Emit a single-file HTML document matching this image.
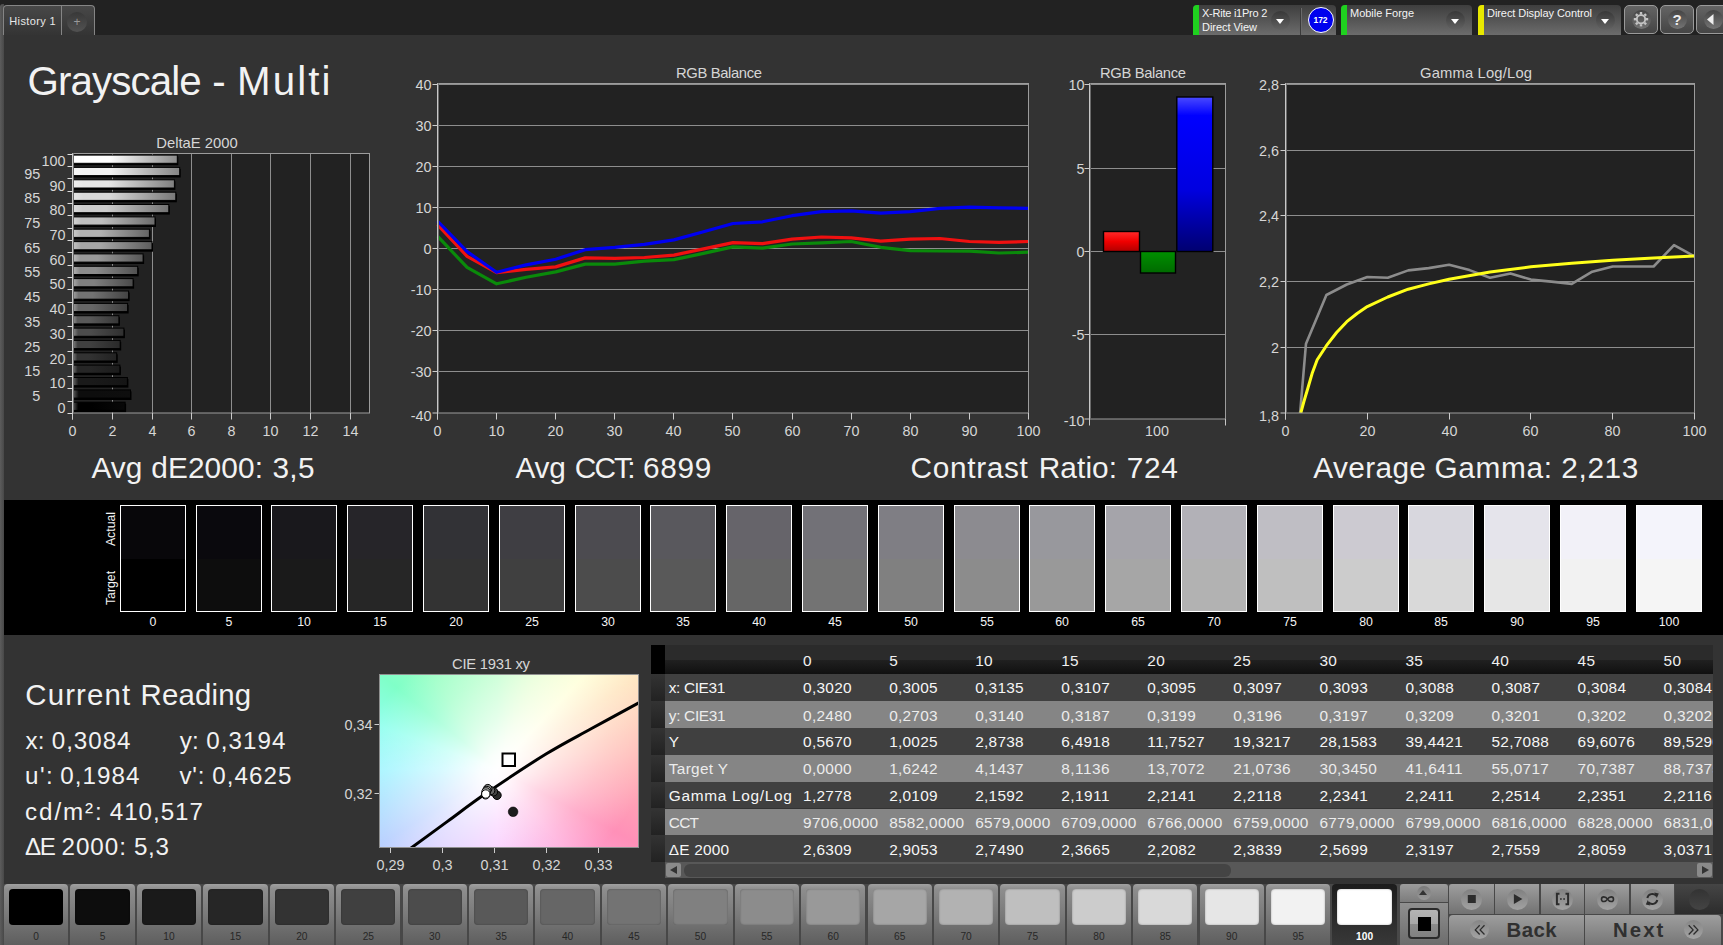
<!DOCTYPE html>
<html lang="en"><head><meta charset="utf-8"><title>Grayscale - Multi</title>
<style>
html,body{margin:0;padding:0;}
body{width:1723px;height:945px;overflow:hidden;background:#333;font-family:"Liberation Sans",sans-serif;position:relative;}
.t{position:absolute;white-space:pre;}
.a{position:absolute;}
.w{position:absolute;top:0;}
svg{position:absolute;left:0;top:0;overflow:visible;}
svg text{font-family:"Liberation Sans",sans-serif;}
.dd{position:absolute;top:5px;height:30px;border-radius:4px 4px 0 0;background:linear-gradient(#3e3e3e,#555 50%,#6c6c6c);overflow:hidden;}
.dd i{position:absolute;left:0;top:0;bottom:0;width:6px;}
.circ{position:absolute;width:19px;height:19px;border-radius:50%;background:linear-gradient(#383838,#626262);}
.tb{position:absolute;top:5px;height:27px;border:1px solid #9a9a9a;border-radius:5px;background:linear-gradient(#646464,#454545);box-sizing:content-box;}
.tb i{position:absolute;left:6.5px;top:4px;width:19px;height:19px;border-radius:50%;background:linear-gradient(#444,#747474);}
</style></head><body>
<div class="a" id="topbar" style="left:0;top:0;width:1723px;height:35px;background:#222;"></div>
<div class="a" id="leftstrip" style="left:0;top:4px;width:3.5px;height:941px;background:linear-gradient(90deg,#5c5c5c,#484848);border-radius:3px 0 0 0;"></div>
<div class="a" style="left:3px;top:5.3px;width:92px;height:29.7px;border-radius:4px 4px 0 0;background:linear-gradient(#484848,#343434);border:1px solid #858585;border-bottom:none;box-sizing:border-box;"></div>
<div class="a" style="left:61px;top:6px;width:1px;height:29px;background:#858585;"></div>
<div class="a" style="left:67px;top:12px;width:20px;height:20px;border-radius:50%;background:linear-gradient(#383838,#525252);"></div>
<span class="t" style="left:9.30px;top:15.69px;font-size:11.00px;line-height:11.00px;color:#e8e8e8;letter-spacing:0.356px;">History 1</span>
<span class="t" style="left:73.50px;top:16.14px;font-size:12.00px;line-height:12.00px;color:#9a9a9a;">+</span>
<div class="dd" style="left:1193px;width:143px;"><i style="background:#1fd11f"></i></div>
<div class="circ" style="left:1270.5px;top:10.5px;"></div>
<div class="a" style="left:1275.5px;top:19px;width:0;height:0;border-left:4.5px solid transparent;border-right:4.5px solid transparent;border-top:5px solid #fff;"></div>
<div class="dd" style="left:1341px;width:131px;"><i style="background:#1fd11f"></i></div>
<div class="circ" style="left:1445.5px;top:10.5px;"></div>
<div class="a" style="left:1450.5px;top:19px;width:0;height:0;border-left:4.5px solid transparent;border-right:4.5px solid transparent;border-top:5px solid #fff;"></div>
<div class="dd" style="left:1478px;width:143px;"><i style="background:#e8e800"></i></div>
<div class="circ" style="left:1595.5px;top:10.5px;"></div>
<div class="a" style="left:1600.5px;top:19px;width:0;height:0;border-left:4.5px solid transparent;border-right:4.5px solid transparent;border-top:5px solid #fff;"></div>
<div class="a" style="left:1300px;top:8px;width:1px;height:27px;background:#3a3a3a;"></div>
<div class="a" style="left:1301px;top:8px;width:1px;height:27px;background:#6a6a6a;"></div>
<span class="t" style="left:1202.00px;top:8.09px;font-size:11.00px;line-height:11.00px;color:#f4f4f4;letter-spacing:-0.248px;">X-Rite i1Pro 2</span>
<span class="t" style="left:1202.00px;top:22.09px;font-size:11.00px;line-height:11.00px;color:#f4f4f4;letter-spacing:-0.039px;">Direct View</span>
<span class="t" style="left:1350.00px;top:8.09px;font-size:11.00px;line-height:11.00px;color:#f4f4f4;letter-spacing:-0.016px;">Mobile Forge</span>
<span class="t" style="left:1487.00px;top:8.09px;font-size:11.00px;line-height:11.00px;color:#f4f4f4;letter-spacing:-0.062px;">Direct Display Control</span>
<div class="a" style="left:1307.5px;top:7px;width:24px;height:24px;border-radius:50%;background:#0000ee;border:1px solid #fff;"></div>
<span class="t" style="left:1313.41px;top:15.80px;font-size:8.50px;line-height:8.50px;color:#fff;font-weight:bold;">172</span>
<div class="tb" style="left:1624px;width:32px;"><i></i></div>
<div class="tb" style="left:1660px;width:32px;"><i></i></div>
<div class="tb" style="left:1696px;width:32px;"><i></i></div>
<svg width="1723" height="40"><g transform="translate(1641,19.2)" fill="none" stroke="#c4c4c4"><circle r="4.2" stroke-width="1.9"/><line x1="0" y1="-5" x2="0" y2="-7.2" stroke-width="2.4" transform="rotate(0)"/><line x1="0" y1="-5" x2="0" y2="-7.2" stroke-width="2.4" transform="rotate(45)"/><line x1="0" y1="-5" x2="0" y2="-7.2" stroke-width="2.4" transform="rotate(90)"/><line x1="0" y1="-5" x2="0" y2="-7.2" stroke-width="2.4" transform="rotate(135)"/><line x1="0" y1="-5" x2="0" y2="-7.2" stroke-width="2.4" transform="rotate(180)"/><line x1="0" y1="-5" x2="0" y2="-7.2" stroke-width="2.4" transform="rotate(225)"/><line x1="0" y1="-5" x2="0" y2="-7.2" stroke-width="2.4" transform="rotate(270)"/><line x1="0" y1="-5" x2="0" y2="-7.2" stroke-width="2.4" transform="rotate(315)"/></g><path d="M1713.5 14 L1713.5 25 L1707 19.5 Z" fill="#eee"/></svg>
<span class="t" style="left:1672.42px;top:11.80px;font-size:15.00px;line-height:15.00px;color:#eee;font-weight:bold;">?</span>
<span class="t" style="left:27.49px;top:62.19px;font-size:40.30px;line-height:40.30px;color:#f2f2f2;"><span class="w" style="left:0.00px;letter-spacing:-0.888px;">Grayscale</span> <span class="w" style="left:184.70px;letter-spacing:0.000px;">-</span> <span class="w" style="left:209.60px;letter-spacing:2.086px;">Multi</span></span>
<span class="t" style="left:91.61px;top:453.37px;font-size:29.80px;line-height:29.80px;color:#f2f2f2;"><span class="w" style="left:0.00px;letter-spacing:-0.109px;">Avg</span> <span class="w" style="left:59.60px;letter-spacing:0.123px;">dE2000:</span> <span class="w" style="left:180.80px;letter-spacing:0.354px;">3,5</span></span>
<span class="t" style="left:515.41px;top:453.37px;font-size:29.80px;line-height:29.80px;color:#f2f2f2;"><span class="w" style="left:0.00px;letter-spacing:-0.175px;">Avg</span> <span class="w" style="left:59.30px;letter-spacing:-1.833px;">CCT:</span> <span class="w" style="left:127.50px;letter-spacing:0.673px;">6899</span></span>
<span class="t" style="left:910.61px;top:453.37px;font-size:29.80px;line-height:29.80px;color:#f2f2f2;"><span class="w" style="left:0.00px;letter-spacing:0.645px;">Contrast</span> <span class="w" style="left:128.10px;letter-spacing:0.107px;">Ratio:</span> <span class="w" style="left:216.20px;letter-spacing:0.622px;">724</span></span>
<span class="t" style="left:1313.31px;top:453.37px;font-size:29.80px;line-height:29.80px;color:#f2f2f2;"><span class="w" style="left:0.00px;letter-spacing:0.361px;">Average</span> <span class="w" style="left:121.20px;letter-spacing:0.655px;">Gamma:</span> <span class="w" style="left:248.00px;letter-spacing:0.623px;">2,213</span></span>
<svg width="1723" height="945" viewBox="0 0 1723 945">
<defs>
<linearGradient id="b0" gradientUnits="userSpaceOnUse" x1="73" x2="125.1" y1="0" y2="0"><stop offset="0" stop-color="rgb(84,84,84)"/><stop offset="0.10" stop-color="rgb(0,0,0)"/><stop offset="0.35" stop-color="rgb(0,0,0)"/><stop offset="1" stop-color="rgb(8,8,8)"/></linearGradient>
<linearGradient id="b1" gradientUnits="userSpaceOnUse" x1="73" x2="130.5" y1="0" y2="0"><stop offset="0" stop-color="rgb(92,92,92)"/><stop offset="0.10" stop-color="rgb(13,13,13)"/><stop offset="0.35" stop-color="rgb(13,13,13)"/><stop offset="1" stop-color="rgb(14,14,14)"/></linearGradient>
<linearGradient id="b2" gradientUnits="userSpaceOnUse" x1="73" x2="127.4" y1="0" y2="0"><stop offset="0" stop-color="rgb(101,101,101)"/><stop offset="0.10" stop-color="rgb(26,26,26)"/><stop offset="0.35" stop-color="rgb(26,26,26)"/><stop offset="1" stop-color="rgb(21,21,21)"/></linearGradient>
<linearGradient id="b3" gradientUnits="userSpaceOnUse" x1="73" x2="119.9" y1="0" y2="0"><stop offset="0" stop-color="rgb(109,109,109)"/><stop offset="0.10" stop-color="rgb(38,38,38)"/><stop offset="0.35" stop-color="rgb(38,38,38)"/><stop offset="1" stop-color="rgb(27,27,27)"/></linearGradient>
<linearGradient id="b4" gradientUnits="userSpaceOnUse" x1="73" x2="116.7" y1="0" y2="0"><stop offset="0" stop-color="rgb(118,118,118)"/><stop offset="0.10" stop-color="rgb(51,51,51)"/><stop offset="0.35" stop-color="rgb(51,51,51)"/><stop offset="1" stop-color="rgb(34,34,34)"/></linearGradient>
<linearGradient id="b5" gradientUnits="userSpaceOnUse" x1="73" x2="120.2" y1="0" y2="0"><stop offset="0" stop-color="rgb(127,127,127)"/><stop offset="0.10" stop-color="rgb(64,64,64)"/><stop offset="0.35" stop-color="rgb(64,64,64)"/><stop offset="1" stop-color="rgb(41,41,41)"/></linearGradient>
<linearGradient id="b6" gradientUnits="userSpaceOnUse" x1="73" x2="123.9" y1="0" y2="0"><stop offset="0" stop-color="rgb(135,135,135)"/><stop offset="0.10" stop-color="rgb(76,76,76)"/><stop offset="0.35" stop-color="rgb(76,76,76)"/><stop offset="1" stop-color="rgb(47,47,47)"/></linearGradient>
<linearGradient id="b7" gradientUnits="userSpaceOnUse" x1="73" x2="118.9" y1="0" y2="0"><stop offset="0" stop-color="rgb(143,143,143)"/><stop offset="0.10" stop-color="rgb(89,89,89)"/><stop offset="0.35" stop-color="rgb(89,89,89)"/><stop offset="1" stop-color="rgb(54,54,54)"/></linearGradient>
<linearGradient id="b8" gradientUnits="userSpaceOnUse" x1="73" x2="127.6" y1="0" y2="0"><stop offset="0" stop-color="rgb(152,152,152)"/><stop offset="0.10" stop-color="rgb(102,102,102)"/><stop offset="0.35" stop-color="rgb(102,102,102)"/><stop offset="1" stop-color="rgb(61,61,61)"/></linearGradient>
<linearGradient id="b9" gradientUnits="userSpaceOnUse" x1="73" x2="128.6" y1="0" y2="0"><stop offset="0" stop-color="rgb(161,161,161)"/><stop offset="0.10" stop-color="rgb(115,115,115)"/><stop offset="0.35" stop-color="rgb(115,115,115)"/><stop offset="1" stop-color="rgb(67,67,67)"/></linearGradient>
<linearGradient id="b10" gradientUnits="userSpaceOnUse" x1="73" x2="133.1" y1="0" y2="0"><stop offset="0" stop-color="rgb(169,169,169)"/><stop offset="0.10" stop-color="rgb(128,128,128)"/><stop offset="0.35" stop-color="rgb(128,128,128)"/><stop offset="1" stop-color="rgb(74,74,74)"/></linearGradient>
<linearGradient id="b11" gradientUnits="userSpaceOnUse" x1="73" x2="137.7" y1="0" y2="0"><stop offset="0" stop-color="rgb(177,177,177)"/><stop offset="0.10" stop-color="rgb(140,140,140)"/><stop offset="0.35" stop-color="rgb(140,140,140)"/><stop offset="1" stop-color="rgb(80,80,80)"/></linearGradient>
<linearGradient id="b12" gradientUnits="userSpaceOnUse" x1="73" x2="143.1" y1="0" y2="0"><stop offset="0" stop-color="rgb(186,186,186)"/><stop offset="0.10" stop-color="rgb(153,153,153)"/><stop offset="0.35" stop-color="rgb(153,153,153)"/><stop offset="1" stop-color="rgb(87,87,87)"/></linearGradient>
<linearGradient id="b13" gradientUnits="userSpaceOnUse" x1="73" x2="152.0" y1="0" y2="0"><stop offset="0" stop-color="rgb(195,195,195)"/><stop offset="0.10" stop-color="rgb(166,166,166)"/><stop offset="0.35" stop-color="rgb(166,166,166)"/><stop offset="1" stop-color="rgb(94,94,94)"/></linearGradient>
<linearGradient id="b14" gradientUnits="userSpaceOnUse" x1="73" x2="149.4" y1="0" y2="0"><stop offset="0" stop-color="rgb(203,203,203)"/><stop offset="0.10" stop-color="rgb(178,178,178)"/><stop offset="0.35" stop-color="rgb(178,178,178)"/><stop offset="1" stop-color="rgb(100,100,100)"/></linearGradient>
<linearGradient id="b15" gradientUnits="userSpaceOnUse" x1="73" x2="155.0" y1="0" y2="0"><stop offset="0" stop-color="rgb(212,212,212)"/><stop offset="0.10" stop-color="rgb(191,191,191)"/><stop offset="0.35" stop-color="rgb(191,191,191)"/><stop offset="1" stop-color="rgb(107,107,107)"/></linearGradient>
<linearGradient id="b16" gradientUnits="userSpaceOnUse" x1="73" x2="168.8" y1="0" y2="0"><stop offset="0" stop-color="rgb(220,220,220)"/><stop offset="0.10" stop-color="rgb(204,204,204)"/><stop offset="0.35" stop-color="rgb(204,204,204)"/><stop offset="1" stop-color="rgb(114,114,114)"/></linearGradient>
<linearGradient id="b17" gradientUnits="userSpaceOnUse" x1="73" x2="175.8" y1="0" y2="0"><stop offset="0" stop-color="rgb(229,229,229)"/><stop offset="0.10" stop-color="rgb(217,217,217)"/><stop offset="0.35" stop-color="rgb(217,217,217)"/><stop offset="1" stop-color="rgb(120,120,120)"/></linearGradient>
<linearGradient id="b18" gradientUnits="userSpaceOnUse" x1="73" x2="174.4" y1="0" y2="0"><stop offset="0" stop-color="rgb(238,238,238)"/><stop offset="0.10" stop-color="rgb(230,230,230)"/><stop offset="0.35" stop-color="rgb(230,230,230)"/><stop offset="1" stop-color="rgb(127,127,127)"/></linearGradient>
<linearGradient id="b19" gradientUnits="userSpaceOnUse" x1="73" x2="179.7" y1="0" y2="0"><stop offset="0" stop-color="rgb(246,246,246)"/><stop offset="0.10" stop-color="rgb(242,242,242)"/><stop offset="0.35" stop-color="rgb(242,242,242)"/><stop offset="1" stop-color="rgb(133,133,133)"/></linearGradient>
<linearGradient id="b20" gradientUnits="userSpaceOnUse" x1="73" x2="177.3" y1="0" y2="0"><stop offset="0" stop-color="rgb(255,255,255)"/><stop offset="0.10" stop-color="rgb(255,255,255)"/><stop offset="0.35" stop-color="rgb(255,255,255)"/><stop offset="1" stop-color="rgb(140,140,140)"/></linearGradient>
<linearGradient id="gr" x1="0" x2="0" y1="0" y2="1"><stop offset="0" stop-color="#ff2a2a"/><stop offset="0.5" stop-color="#f00000"/><stop offset="1" stop-color="#b00000"/></linearGradient>
<linearGradient id="gg" x1="0" x2="0" y1="0" y2="1"><stop offset="0" stop-color="#009000"/><stop offset="1" stop-color="#006a00"/></linearGradient>
<linearGradient id="gb" x1="0" x2="0" y1="0" y2="1"><stop offset="0" stop-color="#4a4aff"/><stop offset="0.12" stop-color="#0000ff"/><stop offset="0.6" stop-color="#0000e0"/><stop offset="1" stop-color="#000070"/></linearGradient>
</defs>
<g id="deltaE">
<rect x="72.5" y="153.5" width="297.0" height="259.5" fill="#222"/>
<line x1="112.5" y1="153.5" x2="112.5" y2="413.0" stroke="#8e8e8e"/>
<line x1="152.5" y1="153.5" x2="152.5" y2="413.0" stroke="#8e8e8e"/>
<line x1="191.5" y1="153.5" x2="191.5" y2="413.0" stroke="#8e8e8e"/>
<line x1="231.5" y1="153.5" x2="231.5" y2="413.0" stroke="#8e8e8e"/>
<line x1="270.5" y1="153.5" x2="270.5" y2="413.0" stroke="#8e8e8e"/>
<line x1="310.5" y1="153.5" x2="310.5" y2="413.0" stroke="#8e8e8e"/>
<line x1="350.5" y1="153.5" x2="350.5" y2="413.0" stroke="#8e8e8e"/>
<rect x="74.0" y="403.7" width="52.1" height="8.6" fill="#000"/>
<rect x="73.0" y="402.2" width="52.1" height="8.2" fill="url(#b0)" stroke="#000" stroke-width="1"/>
<rect x="74.0" y="391.4" width="57.5" height="8.6" fill="#000"/>
<rect x="73.0" y="389.9" width="57.5" height="8.2" fill="url(#b1)" stroke="#000" stroke-width="1"/>
<rect x="74.0" y="379.0" width="54.4" height="8.6" fill="#000"/>
<rect x="73.0" y="377.5" width="54.4" height="8.2" fill="url(#b2)" stroke="#000" stroke-width="1"/>
<rect x="74.0" y="366.6" width="46.9" height="8.6" fill="#000"/>
<rect x="73.0" y="365.1" width="46.9" height="8.2" fill="url(#b3)" stroke="#000" stroke-width="1"/>
<rect x="74.0" y="354.3" width="43.7" height="8.6" fill="#000"/>
<rect x="73.0" y="352.8" width="43.7" height="8.2" fill="url(#b4)" stroke="#000" stroke-width="1"/>
<rect x="74.0" y="341.9" width="47.2" height="8.6" fill="#000"/>
<rect x="73.0" y="340.4" width="47.2" height="8.2" fill="url(#b5)" stroke="#000" stroke-width="1"/>
<rect x="74.0" y="329.6" width="50.9" height="8.6" fill="#000"/>
<rect x="73.0" y="328.1" width="50.9" height="8.2" fill="url(#b6)" stroke="#000" stroke-width="1"/>
<rect x="74.0" y="317.2" width="45.9" height="8.6" fill="#000"/>
<rect x="73.0" y="315.7" width="45.9" height="8.2" fill="url(#b7)" stroke="#000" stroke-width="1"/>
<rect x="74.0" y="304.9" width="54.6" height="8.6" fill="#000"/>
<rect x="73.0" y="303.4" width="54.6" height="8.2" fill="url(#b8)" stroke="#000" stroke-width="1"/>
<rect x="74.0" y="292.5" width="55.6" height="8.6" fill="#000"/>
<rect x="73.0" y="291.0" width="55.6" height="8.2" fill="url(#b9)" stroke="#000" stroke-width="1"/>
<rect x="74.0" y="280.1" width="60.1" height="8.6" fill="#000"/>
<rect x="73.0" y="278.6" width="60.1" height="8.2" fill="url(#b10)" stroke="#000" stroke-width="1"/>
<rect x="74.0" y="267.8" width="64.7" height="8.6" fill="#000"/>
<rect x="73.0" y="266.3" width="64.7" height="8.2" fill="url(#b11)" stroke="#000" stroke-width="1"/>
<rect x="74.0" y="255.4" width="70.1" height="8.6" fill="#000"/>
<rect x="73.0" y="253.9" width="70.1" height="8.2" fill="url(#b12)" stroke="#000" stroke-width="1"/>
<rect x="74.0" y="243.1" width="79.0" height="8.6" fill="#000"/>
<rect x="73.0" y="241.6" width="79.0" height="8.2" fill="url(#b13)" stroke="#000" stroke-width="1"/>
<rect x="74.0" y="230.7" width="76.4" height="8.6" fill="#000"/>
<rect x="73.0" y="229.2" width="76.4" height="8.2" fill="url(#b14)" stroke="#000" stroke-width="1"/>
<rect x="74.0" y="218.4" width="82.0" height="8.6" fill="#000"/>
<rect x="73.0" y="216.9" width="82.0" height="8.2" fill="url(#b15)" stroke="#000" stroke-width="1"/>
<rect x="74.0" y="206.0" width="95.8" height="8.6" fill="#000"/>
<rect x="73.0" y="204.5" width="95.8" height="8.2" fill="url(#b16)" stroke="#000" stroke-width="1"/>
<rect x="74.0" y="193.7" width="102.8" height="8.6" fill="#000"/>
<rect x="73.0" y="192.2" width="102.8" height="8.2" fill="url(#b17)" stroke="#000" stroke-width="1"/>
<rect x="74.0" y="181.3" width="101.4" height="8.6" fill="#000"/>
<rect x="73.0" y="179.8" width="101.4" height="8.2" fill="url(#b18)" stroke="#000" stroke-width="1"/>
<rect x="74.0" y="168.9" width="106.7" height="8.6" fill="#000"/>
<rect x="73.0" y="167.4" width="106.7" height="8.2" fill="url(#b19)" stroke="#000" stroke-width="1"/>
<rect x="74.0" y="156.6" width="104.3" height="8.6" fill="#000"/>
<rect x="73.0" y="155.1" width="104.3" height="8.2" fill="url(#b20)" stroke="#000" stroke-width="1"/>
<rect x="72.5" y="153.5" width="297.0" height="259.5" fill="none" stroke="#9c9c9c"/>
<line x1="72.5" y1="153.5" x2="72.5" y2="419.5" stroke="#c8c8c8"/>
<line x1="73.5" y1="153.5" x2="73.5" y2="413.0" stroke="#6a6a6a"/>
<line x1="67.5" y1="154.5" x2="72.5" y2="154.5" stroke="#ddd"/>
<line x1="67.5" y1="166.5" x2="72.5" y2="166.5" stroke="#ddd"/>
<line x1="67.5" y1="178.5" x2="72.5" y2="178.5" stroke="#ddd"/>
<line x1="67.5" y1="191.5" x2="72.5" y2="191.5" stroke="#ddd"/>
<line x1="67.5" y1="203.5" x2="72.5" y2="203.5" stroke="#ddd"/>
<line x1="67.5" y1="215.5" x2="72.5" y2="215.5" stroke="#ddd"/>
<line x1="67.5" y1="228.5" x2="72.5" y2="228.5" stroke="#ddd"/>
<line x1="67.5" y1="240.5" x2="72.5" y2="240.5" stroke="#ddd"/>
<line x1="67.5" y1="252.5" x2="72.5" y2="252.5" stroke="#ddd"/>
<line x1="67.5" y1="265.5" x2="72.5" y2="265.5" stroke="#ddd"/>
<line x1="67.5" y1="277.5" x2="72.5" y2="277.5" stroke="#ddd"/>
<line x1="67.5" y1="289.5" x2="72.5" y2="289.5" stroke="#ddd"/>
<line x1="67.5" y1="302.5" x2="72.5" y2="302.5" stroke="#ddd"/>
<line x1="67.5" y1="314.5" x2="72.5" y2="314.5" stroke="#ddd"/>
<line x1="67.5" y1="326.5" x2="72.5" y2="326.5" stroke="#ddd"/>
<line x1="67.5" y1="339.5" x2="72.5" y2="339.5" stroke="#ddd"/>
<line x1="67.5" y1="351.5" x2="72.5" y2="351.5" stroke="#ddd"/>
<line x1="67.5" y1="364.5" x2="72.5" y2="364.5" stroke="#ddd"/>
<line x1="67.5" y1="376.5" x2="72.5" y2="376.5" stroke="#ddd"/>
<line x1="67.5" y1="388.5" x2="72.5" y2="388.5" stroke="#ddd"/>
<line x1="67.5" y1="401.5" x2="72.5" y2="401.5" stroke="#ddd"/>
<line x1="67.5" y1="413.5" x2="72.5" y2="413.5" stroke="#ddd"/>
<line x1="72.5" y1="413.0" x2="72.5" y2="419.5" stroke="#ccc"/>
<text x="72.50" y="435.80" font-size="14.30" fill="#d6d6d6" text-anchor="middle">0</text>
<line x1="112.5" y1="413.0" x2="112.5" y2="419.5" stroke="#ccc"/>
<text x="112.50" y="435.80" font-size="14.30" fill="#d6d6d6" text-anchor="middle">2</text>
<line x1="152.5" y1="413.0" x2="152.5" y2="419.5" stroke="#ccc"/>
<text x="152.50" y="435.80" font-size="14.30" fill="#d6d6d6" text-anchor="middle">4</text>
<line x1="191.5" y1="413.0" x2="191.5" y2="419.5" stroke="#ccc"/>
<text x="191.50" y="435.80" font-size="14.30" fill="#d6d6d6" text-anchor="middle">6</text>
<line x1="231.5" y1="413.0" x2="231.5" y2="419.5" stroke="#ccc"/>
<text x="231.50" y="435.80" font-size="14.30" fill="#d6d6d6" text-anchor="middle">8</text>
<line x1="270.5" y1="413.0" x2="270.5" y2="419.5" stroke="#ccc"/>
<text x="270.50" y="435.80" font-size="14.30" fill="#d6d6d6" text-anchor="middle">10</text>
<line x1="310.5" y1="413.0" x2="310.5" y2="419.5" stroke="#ccc"/>
<text x="310.50" y="435.80" font-size="14.30" fill="#d6d6d6" text-anchor="middle">12</text>
<line x1="350.5" y1="413.0" x2="350.5" y2="419.5" stroke="#ccc"/>
<text x="350.50" y="435.80" font-size="14.30" fill="#d6d6d6" text-anchor="middle">14</text>
<text x="65.60" y="413.02" font-size="14.40" fill="#d6d6d6" text-anchor="end">0</text>
<text x="40.30" y="401.06" font-size="14.40" fill="#d6d6d6" text-anchor="end">5</text>
<text x="65.60" y="388.31" font-size="14.40" fill="#d6d6d6" text-anchor="end">10</text>
<text x="40.30" y="376.35" font-size="14.40" fill="#d6d6d6" text-anchor="end">15</text>
<text x="65.60" y="363.59" font-size="14.40" fill="#d6d6d6" text-anchor="end">20</text>
<text x="40.30" y="351.64" font-size="14.40" fill="#d6d6d6" text-anchor="end">25</text>
<text x="65.60" y="338.88" font-size="14.40" fill="#d6d6d6" text-anchor="end">30</text>
<text x="40.30" y="326.92" font-size="14.40" fill="#d6d6d6" text-anchor="end">35</text>
<text x="65.60" y="314.16" font-size="14.40" fill="#d6d6d6" text-anchor="end">40</text>
<text x="40.30" y="302.21" font-size="14.40" fill="#d6d6d6" text-anchor="end">45</text>
<text x="65.60" y="289.45" font-size="14.40" fill="#d6d6d6" text-anchor="end">50</text>
<text x="40.30" y="277.49" font-size="14.40" fill="#d6d6d6" text-anchor="end">55</text>
<text x="65.60" y="264.74" font-size="14.40" fill="#d6d6d6" text-anchor="end">60</text>
<text x="40.30" y="252.78" font-size="14.40" fill="#d6d6d6" text-anchor="end">65</text>
<text x="65.60" y="240.02" font-size="14.40" fill="#d6d6d6" text-anchor="end">70</text>
<text x="40.30" y="228.06" font-size="14.40" fill="#d6d6d6" text-anchor="end">75</text>
<text x="65.60" y="215.31" font-size="14.40" fill="#d6d6d6" text-anchor="end">80</text>
<text x="40.30" y="203.35" font-size="14.40" fill="#d6d6d6" text-anchor="end">85</text>
<text x="65.60" y="190.59" font-size="14.40" fill="#d6d6d6" text-anchor="end">90</text>
<text x="40.30" y="178.64" font-size="14.40" fill="#d6d6d6" text-anchor="end">95</text>
<text x="65.60" y="165.88" font-size="14.40" fill="#d6d6d6" text-anchor="end">100</text>
<text x="197.00" y="147.80" font-size="14.80" fill="#d6d6d6" text-anchor="middle" textLength="81.50" lengthAdjust="spacing">DeltaE 2000</text>
</g>
<g id="rgbline">
<rect x="437.5" y="83.5" width="591.0" height="329.5" fill="#222"/>
<line x1="437.5" y1="371.5" x2="1028.5" y2="371.5" stroke="#8e8e8e"/>
<line x1="437.5" y1="330.5" x2="1028.5" y2="330.5" stroke="#8e8e8e"/>
<line x1="437.5" y1="289.5" x2="1028.5" y2="289.5" stroke="#8e8e8e"/>
<line x1="437.5" y1="248.5" x2="1028.5" y2="248.5" stroke="#8e8e8e"/>
<line x1="437.5" y1="207.5" x2="1028.5" y2="207.5" stroke="#8e8e8e"/>
<line x1="437.5" y1="166.5" x2="1028.5" y2="166.5" stroke="#8e8e8e"/>
<line x1="437.5" y1="125.5" x2="1028.5" y2="125.5" stroke="#8e8e8e"/>
<line x1="437.5" y1="84.5" x2="1028.5" y2="84.5" stroke="#8e8e8e"/>
<polyline points="437.5,236.2 467.1,267.4 496.6,283.8 526.1,277.2 555.7,271.9 585.2,264.1 614.8,264.1 644.4,261.2 673.9,259.6 703.5,253.4 733.0,246.9 762.5,248.1 792.1,244.0 821.6,242.8 851.2,241.5 880.8,247.3 910.3,250.6 939.9,251.0 969.4,251.2 999.0,253.0 1028.5,252.2" fill="none" stroke="#0a8a0a" stroke-width="3.2" stroke-linejoin="round"/>
<polyline points="437.5,224.7 467.1,256.3 496.6,272.7 526.1,269.4 555.7,266.9 585.2,257.9 614.8,258.3 644.4,257.5 673.9,255.1 703.5,248.9 733.0,242.6 762.5,243.6 792.1,239.1 821.6,237.0 851.2,237.8 880.8,241.1 910.3,239.1 939.9,238.5 969.4,241.5 999.0,242.3 1028.5,241.5" fill="none" stroke="#f01010" stroke-width="3.2" stroke-linejoin="round"/>
<polyline points="437.5,221.0 467.1,251.6 496.6,272.3 526.1,264.9 555.7,259.2 585.2,249.7 614.8,247.4 644.4,244.4 673.9,239.9 703.5,231.7 733.0,223.5 762.5,221.8 792.1,215.7 821.6,211.6 851.2,210.8 880.8,213.2 910.3,211.6 939.9,208.3 969.4,207.1 999.0,207.9 1028.5,208.3" fill="none" stroke="#0000f0" stroke-width="3.2" stroke-linejoin="round"/>
<rect x="437.5" y="83.5" width="591.0" height="329.5" fill="none" stroke="#9c9c9c"/>
<line x1="437.5" y1="83.5" x2="437.5" y2="419.5" stroke="#c8c8c8"/>
<line x1="438.5" y1="83.5" x2="438.5" y2="413.0" stroke="#6a6a6a"/>
<line x1="432.5" y1="413.0" x2="437.5" y2="413.0" stroke="#ccc"/>
<text x="431.50" y="420.70" font-size="14.40" fill="#d6d6d6" text-anchor="end">-40</text>
<line x1="432.5" y1="371.5" x2="437.5" y2="371.5" stroke="#ccc"/>
<text x="431.50" y="376.50" font-size="14.40" fill="#d6d6d6" text-anchor="end">-30</text>
<line x1="432.5" y1="330.5" x2="437.5" y2="330.5" stroke="#ccc"/>
<text x="431.50" y="335.50" font-size="14.40" fill="#d6d6d6" text-anchor="end">-20</text>
<line x1="432.5" y1="289.5" x2="437.5" y2="289.5" stroke="#ccc"/>
<text x="431.50" y="294.50" font-size="14.40" fill="#d6d6d6" text-anchor="end">-10</text>
<line x1="432.5" y1="248.5" x2="437.5" y2="248.5" stroke="#ccc"/>
<text x="431.50" y="253.50" font-size="14.40" fill="#d6d6d6" text-anchor="end">0</text>
<line x1="432.5" y1="207.5" x2="437.5" y2="207.5" stroke="#ccc"/>
<text x="431.50" y="212.50" font-size="14.40" fill="#d6d6d6" text-anchor="end">10</text>
<line x1="432.5" y1="166.5" x2="437.5" y2="166.5" stroke="#ccc"/>
<text x="431.50" y="171.50" font-size="14.40" fill="#d6d6d6" text-anchor="end">20</text>
<line x1="432.5" y1="125.5" x2="437.5" y2="125.5" stroke="#ccc"/>
<text x="431.50" y="130.50" font-size="14.40" fill="#d6d6d6" text-anchor="end">30</text>
<line x1="432.5" y1="84.5" x2="437.5" y2="84.5" stroke="#ccc"/>
<text x="431.50" y="89.50" font-size="14.40" fill="#d6d6d6" text-anchor="end">40</text>
<line x1="437.5" y1="413.0" x2="437.5" y2="419.5" stroke="#ccc"/>
<text x="437.50" y="435.80" font-size="14.30" fill="#d6d6d6" text-anchor="middle">0</text>
<line x1="496.5" y1="413.0" x2="496.5" y2="419.5" stroke="#ccc"/>
<text x="496.50" y="435.80" font-size="14.30" fill="#d6d6d6" text-anchor="middle">10</text>
<line x1="555.5" y1="413.0" x2="555.5" y2="419.5" stroke="#ccc"/>
<text x="555.50" y="435.80" font-size="14.30" fill="#d6d6d6" text-anchor="middle">20</text>
<line x1="614.5" y1="413.0" x2="614.5" y2="419.5" stroke="#ccc"/>
<text x="614.50" y="435.80" font-size="14.30" fill="#d6d6d6" text-anchor="middle">30</text>
<line x1="673.5" y1="413.0" x2="673.5" y2="419.5" stroke="#ccc"/>
<text x="673.50" y="435.80" font-size="14.30" fill="#d6d6d6" text-anchor="middle">40</text>
<line x1="732.5" y1="413.0" x2="732.5" y2="419.5" stroke="#ccc"/>
<text x="732.50" y="435.80" font-size="14.30" fill="#d6d6d6" text-anchor="middle">50</text>
<line x1="792.5" y1="413.0" x2="792.5" y2="419.5" stroke="#ccc"/>
<text x="792.50" y="435.80" font-size="14.30" fill="#d6d6d6" text-anchor="middle">60</text>
<line x1="851.5" y1="413.0" x2="851.5" y2="419.5" stroke="#ccc"/>
<text x="851.50" y="435.80" font-size="14.30" fill="#d6d6d6" text-anchor="middle">70</text>
<line x1="910.5" y1="413.0" x2="910.5" y2="419.5" stroke="#ccc"/>
<text x="910.50" y="435.80" font-size="14.30" fill="#d6d6d6" text-anchor="middle">80</text>
<line x1="969.5" y1="413.0" x2="969.5" y2="419.5" stroke="#ccc"/>
<text x="969.50" y="435.80" font-size="14.30" fill="#d6d6d6" text-anchor="middle">90</text>
<line x1="1028.5" y1="413.0" x2="1028.5" y2="419.5" stroke="#ccc"/>
<text x="1028.50" y="435.80" font-size="14.30" fill="#d6d6d6" text-anchor="middle">100</text>
<text x="719.00" y="78.00" font-size="14.80" fill="#d6d6d6" text-anchor="middle" textLength="86.00" lengthAdjust="spacing">RGB Balance</text>
</g>
<g id="rgbbar">
<rect x="1089.5" y="83.5" width="136.0" height="335.5" fill="#222"/>
<line x1="1089.5" y1="334.5" x2="1225.5" y2="334.5" stroke="#8e8e8e"/>
<line x1="1089.5" y1="251.5" x2="1225.5" y2="251.5" stroke="#8e8e8e"/>
<line x1="1089.5" y1="168.5" x2="1225.5" y2="168.5" stroke="#8e8e8e"/>
<line x1="1089.5" y1="84.5" x2="1225.5" y2="84.5" stroke="#8e8e8e"/>
<rect x="1103.5" y="231.5" width="36" height="20" fill="url(#gr)" stroke="#000" stroke-width="1.4"/>
<rect x="1140.5" y="251.5" width="35" height="21.5" fill="url(#gg)" stroke="#000" stroke-width="1.4"/>
<rect x="1176.8" y="97" width="36" height="154.5" fill="url(#gb)" stroke="#000" stroke-width="1.4"/>
<rect x="1089.5" y="83.5" width="136.0" height="335.5" fill="none" stroke="#9c9c9c"/>
<line x1="1089.5" y1="83.5" x2="1089.5" y2="425.5" stroke="#c8c8c8"/>
<line x1="1090.5" y1="83.5" x2="1090.5" y2="419.0" stroke="#6a6a6a"/>
<line x1="1225.5" y1="419.0" x2="1225.5" y2="425.5" stroke="#c8c8c8"/>
<line x1="1084.5" y1="419.0" x2="1089.5" y2="419.0" stroke="#ccc"/>
<text x="1084.50" y="426.20" font-size="14.40" fill="#d6d6d6" text-anchor="end">-10</text>
<line x1="1084.5" y1="334.5" x2="1089.5" y2="334.5" stroke="#ccc"/>
<text x="1084.50" y="339.50" font-size="14.40" fill="#d6d6d6" text-anchor="end">-5</text>
<line x1="1084.5" y1="251.5" x2="1089.5" y2="251.5" stroke="#ccc"/>
<text x="1084.50" y="256.50" font-size="14.40" fill="#d6d6d6" text-anchor="end">0</text>
<line x1="1084.5" y1="168.5" x2="1089.5" y2="168.5" stroke="#ccc"/>
<text x="1084.50" y="173.50" font-size="14.40" fill="#d6d6d6" text-anchor="end">5</text>
<line x1="1084.5" y1="84.5" x2="1089.5" y2="84.5" stroke="#ccc"/>
<text x="1084.50" y="89.50" font-size="14.40" fill="#d6d6d6" text-anchor="end">10</text>
<text x="1157.00" y="435.80" font-size="14.30" fill="#d6d6d6" text-anchor="middle">100</text>
<text x="1143.00" y="78.00" font-size="14.80" fill="#d6d6d6" text-anchor="middle" textLength="86.00" lengthAdjust="spacing">RGB Balance</text>
</g>
<g id="gamma">
<rect x="1285.5" y="83.5" width="409.0" height="329.5" fill="#222"/>
<line x1="1285.5" y1="347.5" x2="1694.5" y2="347.5" stroke="#8e8e8e"/>
<line x1="1285.5" y1="281.5" x2="1694.5" y2="281.5" stroke="#8e8e8e"/>
<line x1="1285.5" y1="215.5" x2="1694.5" y2="215.5" stroke="#8e8e8e"/>
<line x1="1285.5" y1="150.5" x2="1694.5" y2="150.5" stroke="#8e8e8e"/>
<line x1="1285.5" y1="84.5" x2="1694.5" y2="84.5" stroke="#8e8e8e"/>
<clipPath id="gclip"><rect x="1285.5" y="83.5" width="411.0" height="329.5"/></clipPath>
<polyline points="1285.5,584.5 1306.0,343.7 1326.4,295.0 1346.8,284.5 1367.3,277.0 1387.8,277.7 1408.2,270.4 1428.7,268.1 1449.1,264.7 1469.5,270.1 1490.0,277.8 1510.5,273.4 1530.9,279.6 1551.3,281.6 1571.8,283.9 1592.2,271.7 1612.7,266.5 1633.2,266.5 1653.6,266.5 1674.0,245.1 1694.5,256.3" fill="none" stroke="#8c8c8c" stroke-width="2.6" stroke-linejoin="round" clip-path="url(#gclip)"/>
<polyline points="1300.8,413.0 1303.9,401.5 1308.0,387.7 1312.1,373.6 1317.2,359.8 1326.4,345.7 1336.6,332.5 1346.8,321.7 1357.1,313.5 1367.3,306.6 1387.8,297.0 1408.2,289.2 1428.7,283.9 1449.1,279.3 1490.0,272.1 1530.9,266.8 1571.8,263.2 1612.7,260.2 1653.6,257.9 1694.5,256.0" fill="none" stroke="#ffff1a" stroke-width="3" stroke-linejoin="round" clip-path="url(#gclip)"/>
<rect x="1285.5" y="83.5" width="409.0" height="329.5" fill="none" stroke="#9c9c9c"/>
<line x1="1285.5" y1="83.5" x2="1285.5" y2="419.5" stroke="#c8c8c8"/>
<line x1="1286.5" y1="83.5" x2="1286.5" y2="413.0" stroke="#6a6a6a"/>
<line x1="1280.5" y1="413.0" x2="1285.5" y2="413.0" stroke="#ccc"/>
<text x="1279.00" y="420.70" font-size="14.40" fill="#d6d6d6" text-anchor="end">1,8</text>
<line x1="1280.5" y1="347.5" x2="1285.5" y2="347.5" stroke="#ccc"/>
<text x="1279.00" y="352.50" font-size="14.40" fill="#d6d6d6" text-anchor="end">2</text>
<line x1="1280.5" y1="281.5" x2="1285.5" y2="281.5" stroke="#ccc"/>
<text x="1279.00" y="286.50" font-size="14.40" fill="#d6d6d6" text-anchor="end">2,2</text>
<line x1="1280.5" y1="215.5" x2="1285.5" y2="215.5" stroke="#ccc"/>
<text x="1279.00" y="220.50" font-size="14.40" fill="#d6d6d6" text-anchor="end">2,4</text>
<line x1="1280.5" y1="150.5" x2="1285.5" y2="150.5" stroke="#ccc"/>
<text x="1279.00" y="155.50" font-size="14.40" fill="#d6d6d6" text-anchor="end">2,6</text>
<line x1="1280.5" y1="84.5" x2="1285.5" y2="84.5" stroke="#ccc"/>
<text x="1279.00" y="89.50" font-size="14.40" fill="#d6d6d6" text-anchor="end">2,8</text>
<line x1="1285.5" y1="413.0" x2="1285.5" y2="419.5" stroke="#ccc"/>
<text x="1285.50" y="435.80" font-size="14.30" fill="#d6d6d6" text-anchor="middle">0</text>
<line x1="1367.5" y1="413.0" x2="1367.5" y2="419.5" stroke="#ccc"/>
<text x="1367.50" y="435.80" font-size="14.30" fill="#d6d6d6" text-anchor="middle">20</text>
<line x1="1449.5" y1="413.0" x2="1449.5" y2="419.5" stroke="#ccc"/>
<text x="1449.50" y="435.80" font-size="14.30" fill="#d6d6d6" text-anchor="middle">40</text>
<line x1="1530.5" y1="413.0" x2="1530.5" y2="419.5" stroke="#ccc"/>
<text x="1530.50" y="435.80" font-size="14.30" fill="#d6d6d6" text-anchor="middle">60</text>
<line x1="1612.5" y1="413.0" x2="1612.5" y2="419.5" stroke="#ccc"/>
<text x="1612.50" y="435.80" font-size="14.30" fill="#d6d6d6" text-anchor="middle">80</text>
<line x1="1694.5" y1="413.0" x2="1694.5" y2="419.5" stroke="#ccc"/>
<text x="1694.50" y="435.80" font-size="14.30" fill="#d6d6d6" text-anchor="middle">100</text>
<text x="1476.00" y="78.00" font-size="14.80" fill="#d6d6d6" text-anchor="middle" textLength="112.00" lengthAdjust="spacing">Gamma Log/Log</text>
</g>
</svg>
<div class="a" id="band" style="left:3.5px;top:499.7px;width:1720px;height:135px;background:#000;"></div>
<div class="a" style="left:120.0px;top:505px;width:64px;height:105px;border:1px solid #fff;background:linear-gradient(rgb(8,7,10) 0,rgb(8,7,10) 50.5%,rgb(0,0,0) 50.5%,rgb(0,0,0) 100%);"></div>
<span class="t" style="left:149.58px;top:615.79px;font-size:12.30px;line-height:12.30px;color:#f4f4f4;">0</span>
<div class="a" style="left:196.0px;top:505px;width:64px;height:105px;border:1px solid #fff;background:linear-gradient(rgb(10,9,13) 0,rgb(10,9,13) 50.5%,rgb(13,13,13) 50.5%,rgb(13,13,13) 100%);"></div>
<span class="t" style="left:225.58px;top:615.79px;font-size:12.30px;line-height:12.30px;color:#f4f4f4;">5</span>
<div class="a" style="left:271.0px;top:505px;width:64px;height:105px;border:1px solid #fff;background:linear-gradient(rgb(25,24,28) 0,rgb(25,24,28) 50.5%,rgb(26,26,26) 50.5%,rgb(26,26,26) 100%);"></div>
<span class="t" style="left:297.16px;top:615.79px;font-size:12.30px;line-height:12.30px;color:#f4f4f4;">10</span>
<div class="a" style="left:347.0px;top:505px;width:64px;height:105px;border:1px solid #fff;background:linear-gradient(rgb(38,37,41) 0,rgb(38,37,41) 50.5%,rgb(38,38,38) 50.5%,rgb(38,38,38) 100%);"></div>
<span class="t" style="left:373.16px;top:615.79px;font-size:12.30px;line-height:12.30px;color:#f4f4f4;">15</span>
<div class="a" style="left:423.0px;top:505px;width:64px;height:105px;border:1px solid #fff;background:linear-gradient(rgb(50,50,54) 0,rgb(50,50,54) 50.5%,rgb(51,51,51) 50.5%,rgb(51,51,51) 100%);"></div>
<span class="t" style="left:449.16px;top:615.79px;font-size:12.30px;line-height:12.30px;color:#f4f4f4;">20</span>
<div class="a" style="left:499.0px;top:505px;width:64px;height:105px;border:1px solid #fff;background:linear-gradient(rgb(63,62,67) 0,rgb(63,62,67) 50.5%,rgb(64,64,64) 50.5%,rgb(64,64,64) 100%);"></div>
<span class="t" style="left:525.16px;top:615.79px;font-size:12.30px;line-height:12.30px;color:#f4f4f4;">25</span>
<div class="a" style="left:575.0px;top:505px;width:64px;height:105px;border:1px solid #fff;background:linear-gradient(rgb(76,75,80) 0,rgb(76,75,80) 50.5%,rgb(76,76,76) 50.5%,rgb(76,76,76) 100%);"></div>
<span class="t" style="left:601.16px;top:615.79px;font-size:12.30px;line-height:12.30px;color:#f4f4f4;">30</span>
<div class="a" style="left:650.0px;top:505px;width:64px;height:105px;border:1px solid #fff;background:linear-gradient(rgb(89,88,93) 0,rgb(89,88,93) 50.5%,rgb(89,89,89) 50.5%,rgb(89,89,89) 100%);"></div>
<span class="t" style="left:676.16px;top:615.79px;font-size:12.30px;line-height:12.30px;color:#f4f4f4;">35</span>
<div class="a" style="left:726.0px;top:505px;width:64px;height:105px;border:1px solid #fff;background:linear-gradient(rgb(102,100,106) 0,rgb(102,100,106) 50.5%,rgb(102,102,102) 50.5%,rgb(102,102,102) 100%);"></div>
<span class="t" style="left:752.16px;top:615.79px;font-size:12.30px;line-height:12.30px;color:#f4f4f4;">40</span>
<div class="a" style="left:802.0px;top:505px;width:64px;height:105px;border:1px solid #fff;background:linear-gradient(rgb(114,113,119) 0,rgb(114,113,119) 50.5%,rgb(115,115,115) 50.5%,rgb(115,115,115) 100%);"></div>
<span class="t" style="left:828.16px;top:615.79px;font-size:12.30px;line-height:12.30px;color:#f4f4f4;">45</span>
<div class="a" style="left:878.0px;top:505px;width:64px;height:105px;border:1px solid #fff;background:linear-gradient(rgb(127,126,132) 0,rgb(127,126,132) 50.5%,rgb(128,128,128) 50.5%,rgb(128,128,128) 100%);"></div>
<span class="t" style="left:904.16px;top:615.79px;font-size:12.30px;line-height:12.30px;color:#f4f4f4;">50</span>
<div class="a" style="left:954.0px;top:505px;width:64px;height:105px;border:1px solid #fff;background:linear-gradient(rgb(140,139,144) 0,rgb(140,139,144) 50.5%,rgb(140,140,140) 50.5%,rgb(140,140,140) 100%);"></div>
<span class="t" style="left:980.16px;top:615.79px;font-size:12.30px;line-height:12.30px;color:#f4f4f4;">55</span>
<div class="a" style="left:1029.0px;top:505px;width:64px;height:105px;border:1px solid #fff;background:linear-gradient(rgb(152,152,157) 0,rgb(152,152,157) 50.5%,rgb(153,153,153) 50.5%,rgb(153,153,153) 100%);"></div>
<span class="t" style="left:1055.16px;top:615.79px;font-size:12.30px;line-height:12.30px;color:#f4f4f4;">60</span>
<div class="a" style="left:1105.0px;top:505px;width:64px;height:105px;border:1px solid #fff;background:linear-gradient(rgb(165,164,170) 0,rgb(165,164,170) 50.5%,rgb(166,166,166) 50.5%,rgb(166,166,166) 100%);"></div>
<span class="t" style="left:1131.16px;top:615.79px;font-size:12.30px;line-height:12.30px;color:#f4f4f4;">65</span>
<div class="a" style="left:1181.0px;top:505px;width:64px;height:105px;border:1px solid #fff;background:linear-gradient(rgb(178,177,183) 0,rgb(178,177,183) 50.5%,rgb(178,178,178) 50.5%,rgb(178,178,178) 100%);"></div>
<span class="t" style="left:1207.16px;top:615.79px;font-size:12.30px;line-height:12.30px;color:#f4f4f4;">70</span>
<div class="a" style="left:1257.0px;top:505px;width:64px;height:105px;border:1px solid #fff;background:linear-gradient(rgb(191,190,196) 0,rgb(191,190,196) 50.5%,rgb(191,191,191) 50.5%,rgb(191,191,191) 100%);"></div>
<span class="t" style="left:1283.16px;top:615.79px;font-size:12.30px;line-height:12.30px;color:#f4f4f4;">75</span>
<div class="a" style="left:1333.0px;top:505px;width:64px;height:105px;border:1px solid #fff;background:linear-gradient(rgb(204,202,209) 0,rgb(204,202,209) 50.5%,rgb(204,204,204) 50.5%,rgb(204,204,204) 100%);"></div>
<span class="t" style="left:1359.16px;top:615.79px;font-size:12.30px;line-height:12.30px;color:#f4f4f4;">80</span>
<div class="a" style="left:1408.0px;top:505px;width:64px;height:105px;border:1px solid #fff;background:linear-gradient(rgb(216,215,222) 0,rgb(216,215,222) 50.5%,rgb(217,217,217) 50.5%,rgb(217,217,217) 100%);"></div>
<span class="t" style="left:1434.16px;top:615.79px;font-size:12.30px;line-height:12.30px;color:#f4f4f4;">85</span>
<div class="a" style="left:1484.0px;top:505px;width:64px;height:105px;border:1px solid #fff;background:linear-gradient(rgb(229,228,235) 0,rgb(229,228,235) 50.5%,rgb(230,230,230) 50.5%,rgb(230,230,230) 100%);"></div>
<span class="t" style="left:1510.16px;top:615.79px;font-size:12.30px;line-height:12.30px;color:#f4f4f4;">90</span>
<div class="a" style="left:1560.0px;top:505px;width:64px;height:105px;border:1px solid #fff;background:linear-gradient(rgb(242,241,248) 0,rgb(242,241,248) 50.5%,rgb(242,242,242) 50.5%,rgb(242,242,242) 100%);"></div>
<span class="t" style="left:1586.16px;top:615.79px;font-size:12.30px;line-height:12.30px;color:#f4f4f4;">95</span>
<div class="a" style="left:1636.0px;top:505px;width:64px;height:105px;border:1px solid #fff;background:linear-gradient(rgb(244,244,251) 0,rgb(244,244,251) 50.5%,rgb(245,245,245) 50.5%,rgb(245,245,245) 100%);"></div>
<span class="t" style="left:1658.74px;top:615.79px;font-size:12.30px;line-height:12.30px;color:#f4f4f4;">100</span>
<span class="t" style="left:111px;top:529px;font-size:12.3px;line-height:12px;color:#f4f4f4;transform:translate(-50%,-50%) rotate(-90deg);">Actual</span>
<span class="t" style="left:111px;top:588px;font-size:12.3px;line-height:12px;color:#f4f4f4;transform:translate(-50%,-50%) rotate(-90deg);">Target</span>
<span class="t" style="left:25.32px;top:679.51px;font-size:29.40px;line-height:29.40px;color:#f2f2f2;"><span class="w" style="left:0.00px;letter-spacing:1.147px;">Current</span> <span class="w" style="left:115.30px;letter-spacing:0.163px;">Reading</span></span>
<span class="t" style="left:25.47px;top:729.01px;font-size:24.20px;line-height:24.20px;color:#f2f2f2;"><span class="w" style="left:0.00px;letter-spacing:0.214px;">x:</span> <span class="w" style="left:26.30px;letter-spacing:0.955px;">0,3084</span> <span class="w" style="left:154.30px;letter-spacing:0.064px;">y:</span> <span class="w" style="left:180.70px;letter-spacing:1.039px;">0,3194</span></span>
<span class="t" style="left:25.07px;top:764.11px;font-size:24.20px;line-height:24.20px;color:#f2f2f2;"><span class="w" style="left:0.00px;letter-spacing:1.416px;">u':</span> <span class="w" style="left:35.20px;letter-spacing:1.022px;">0,1984</span> <span class="w" style="left:154.40px;letter-spacing:0.769px;">v':</span> <span class="w" style="left:187.10px;letter-spacing:1.039px;">0,4625</span></span>
<span class="t" style="left:25.07px;top:799.91px;font-size:24.20px;line-height:24.20px;color:#f2f2f2;"><span class="w" style="left:0.00px;letter-spacing:1.888px;">cd/m²:</span> <span class="w" style="left:84.70px;letter-spacing:0.968px;">410,517</span></span>
<span class="t" style="left:25.07px;top:835.11px;font-size:24.20px;line-height:24.20px;color:#f2f2f2;"><span class="w" style="left:0.00px;letter-spacing:-1.377px;">ΔE</span> <span class="w" style="left:36.40px;letter-spacing:0.998px;">2000:</span> <span class="w" style="left:108.90px;letter-spacing:0.703px;">5,3</span></span>
<div class="a" id="cie" style="left:379px;top:674px;width:260px;height:174px;box-sizing:border-box;border:1px solid #909090;background:conic-gradient(from 0deg at 45.4% 54.6%,#b8ffc8 0deg,#e0ffc8 22deg,#ffffcc 43deg,#ffe2b8 57deg,#ffc4b4 75deg,#ffb0b4 90deg,#ff90b8 118deg,#ffa4d8 140deg,#f6b8ff 180deg,#c4b8ff 220deg,#a0c0ff 237deg,#98dcff 255deg,#96f4ff 270deg,#90ffee 290deg,#80ffc8 309deg,#98ffc4 325deg,#b8ffc8 360deg);"></div>
<svg width="1723" height="945" viewBox="0 0 1723 945">
<clipPath id="cclip"><rect x="380" y="675" width="258" height="172"/></clipPath>
<radialGradient id="wg" gradientUnits="userSpaceOnUse" cx="0" cy="0" r="1" gradientTransform="translate(497,769) rotate(-41) scale(205,128)"><stop offset="0" stop-color="#fff" stop-opacity="1"/><stop offset="0.1" stop-color="#fff" stop-opacity="0.94"/><stop offset="0.35" stop-color="#fff" stop-opacity="0.62"/><stop offset="0.65" stop-color="#fff" stop-opacity="0.3"/><stop offset="1" stop-color="#fff" stop-opacity="0"/></radialGradient>
<rect x="380" y="675" width="258" height="172" fill="url(#wg)"/>
<path d="M409.7 849.0 C416.0 844.4 434.9 830.6 447.5 821.4 C460.1 812.2 468.9 805.1 485.4 793.8 C501.9 782.5 528.6 764.7 546.4 753.8 C564.2 742.9 576.5 736.9 592.0 728.3 C607.5 719.7 631.7 706.6 639.6 702.3" fill="none" stroke="#000" stroke-width="3" stroke-linejoin="round" clip-path="url(#cclip)"/>
<rect x="502.5" y="753.5" width="12.5" height="12.5" fill="#fff" stroke="#000" stroke-width="2"/>
<circle cx="513.1" cy="811.8" r="4.8" fill="#1c1c1c" stroke="#000" stroke-width="0.6"/>
<circle cx="497.0" cy="795.3" r="4.2" fill="#2a2a2a" stroke="#000" stroke-width="1"/>
<circle cx="493.5" cy="791.8" r="4.2" fill="#444" stroke="#000" stroke-width="1"/>
<circle cx="490.6" cy="790.6" r="4.2" fill="#666" stroke="#000" stroke-width="1"/>
<circle cx="487.8" cy="788.6" r="4.2" fill="#888" stroke="#000" stroke-width="1"/>
<circle cx="486.8" cy="790.5" r="4.2" fill="#aaa" stroke="#000" stroke-width="1"/>
<circle cx="486.0" cy="792.0" r="4.2" fill="#ccc" stroke="#000" stroke-width="1"/>
<circle cx="485.6" cy="794.8" r="4.2" fill="#e8e8e8" stroke="#000" stroke-width="1"/>
<circle cx="485.8" cy="794.0" r="4.2" fill="#fff" stroke="#000" stroke-width="1"/>
<line x1="390.5" y1="848" x2="390.5" y2="853" stroke="#ccc"/>
<text x="390.50" y="870.00" font-size="14.40" fill="#d6d6d6" text-anchor="middle">0,29</text>
<line x1="442.5" y1="848" x2="442.5" y2="853" stroke="#ccc"/>
<text x="442.50" y="870.00" font-size="14.40" fill="#d6d6d6" text-anchor="middle">0,3</text>
<line x1="494.5" y1="848" x2="494.5" y2="853" stroke="#ccc"/>
<text x="494.50" y="870.00" font-size="14.40" fill="#d6d6d6" text-anchor="middle">0,31</text>
<line x1="546.5" y1="848" x2="546.5" y2="853" stroke="#ccc"/>
<text x="546.50" y="870.00" font-size="14.40" fill="#d6d6d6" text-anchor="middle">0,32</text>
<line x1="598.5" y1="848" x2="598.5" y2="853" stroke="#ccc"/>
<text x="598.50" y="870.00" font-size="14.40" fill="#d6d6d6" text-anchor="middle">0,33</text>
<line x1="374.5" y1="793.5" x2="379" y2="793.5" stroke="#ccc"/>
<text x="372.50" y="799.30" font-size="14.40" fill="#d6d6d6" text-anchor="end">0,32</text>
<line x1="374.5" y1="724.5" x2="379" y2="724.5" stroke="#ccc"/>
<text x="372.50" y="730.30" font-size="14.40" fill="#d6d6d6" text-anchor="end">0,34</text>
<text x="491.00" y="669.30" font-size="14.80" fill="#d6d6d6" text-anchor="middle" textLength="78.00" lengthAdjust="spacing">CIE 1931 xy</text>
</svg>
<div class="a" id="table" style="left:651px;top:645px;width:1062px;height:233px;overflow:hidden;">
<div class="a" style="left:0;top:0;width:1062px;height:15px;background:#2b2b2b;"></div>
<div class="a" style="left:0;top:15px;width:1062px;height:14px;background:linear-gradient(#202020,#101010);"></div>
<div class="a" style="left:0;top:0;width:14px;height:29px;background:#000;"></div>
<span class="t" style="left:152.10px;top:7.56px;font-size:15.40px;line-height:15.40px;color:#f0f0f0;">0</span>
<span class="t" style="left:238.15px;top:7.56px;font-size:15.40px;line-height:15.40px;color:#f0f0f0;">5</span>
<span class="t" style="left:324.20px;top:7.56px;font-size:15.40px;line-height:15.40px;color:#f0f0f0;letter-spacing:0.305px;">10</span>
<span class="t" style="left:410.25px;top:7.56px;font-size:15.40px;line-height:15.40px;color:#f0f0f0;letter-spacing:0.305px;">15</span>
<span class="t" style="left:496.30px;top:7.56px;font-size:15.40px;line-height:15.40px;color:#f0f0f0;letter-spacing:0.305px;">20</span>
<span class="t" style="left:582.35px;top:7.56px;font-size:15.40px;line-height:15.40px;color:#f0f0f0;letter-spacing:0.305px;">25</span>
<span class="t" style="left:668.40px;top:7.56px;font-size:15.40px;line-height:15.40px;color:#f0f0f0;letter-spacing:0.305px;">30</span>
<span class="t" style="left:754.45px;top:7.56px;font-size:15.40px;line-height:15.40px;color:#f0f0f0;letter-spacing:0.305px;">35</span>
<span class="t" style="left:840.50px;top:7.56px;font-size:15.40px;line-height:15.40px;color:#f0f0f0;letter-spacing:0.305px;">40</span>
<span class="t" style="left:926.55px;top:7.56px;font-size:15.40px;line-height:15.40px;color:#f0f0f0;letter-spacing:0.305px;">45</span>
<span class="t" style="left:1012.60px;top:7.56px;font-size:15.40px;line-height:15.40px;color:#f0f0f0;letter-spacing:0.305px;">50</span>
<div class="a" style="left:14px;top:28.6px;width:1048px;height:27.5px;background:#404040;"></div>
<div class="a" style="left:0;top:28.6px;width:14px;height:27.5px;background:linear-gradient(#333,#222);"></div>
<span class="t" style="left:17.80px;top:35.41px;font-size:15.40px;line-height:15.40px;color:#f6f6f6;letter-spacing:-0.370px;">x: CIE31</span>
<span class="t" style="left:152.10px;top:35.41px;font-size:15.40px;line-height:15.40px;color:#f6f6f6;letter-spacing:0.274px;">0,3020</span>
<span class="t" style="left:238.15px;top:35.41px;font-size:15.40px;line-height:15.40px;color:#f6f6f6;letter-spacing:0.274px;">0,3005</span>
<span class="t" style="left:324.20px;top:35.41px;font-size:15.40px;line-height:15.40px;color:#f6f6f6;letter-spacing:0.274px;">0,3135</span>
<span class="t" style="left:410.25px;top:35.41px;font-size:15.40px;line-height:15.40px;color:#f6f6f6;letter-spacing:0.274px;">0,3107</span>
<span class="t" style="left:496.30px;top:35.41px;font-size:15.40px;line-height:15.40px;color:#f6f6f6;letter-spacing:0.274px;">0,3095</span>
<span class="t" style="left:582.35px;top:35.41px;font-size:15.40px;line-height:15.40px;color:#f6f6f6;letter-spacing:0.274px;">0,3097</span>
<span class="t" style="left:668.40px;top:35.41px;font-size:15.40px;line-height:15.40px;color:#f6f6f6;letter-spacing:0.274px;">0,3093</span>
<span class="t" style="left:754.45px;top:35.41px;font-size:15.40px;line-height:15.40px;color:#f6f6f6;letter-spacing:0.274px;">0,3088</span>
<span class="t" style="left:840.50px;top:35.41px;font-size:15.40px;line-height:15.40px;color:#f6f6f6;letter-spacing:0.274px;">0,3087</span>
<span class="t" style="left:926.55px;top:35.41px;font-size:15.40px;line-height:15.40px;color:#f6f6f6;letter-spacing:0.274px;">0,3084</span>
<span class="t" style="left:1012.60px;top:35.41px;font-size:15.40px;line-height:15.40px;color:#f6f6f6;letter-spacing:0.274px;">0,3084</span>
<div class="a" style="left:14px;top:56.1px;width:1048px;height:26.9px;background:#858585;"></div>
<div class="a" style="left:0;top:56.1px;width:14px;height:26.9px;background:linear-gradient(#333,#222);"></div>
<span class="t" style="left:17.80px;top:62.61px;font-size:15.40px;line-height:15.40px;color:#ececec;letter-spacing:-0.320px;">y: CIE31</span>
<span class="t" style="left:152.10px;top:62.61px;font-size:15.40px;line-height:15.40px;color:#ececec;letter-spacing:0.274px;">0,2480</span>
<span class="t" style="left:238.15px;top:62.61px;font-size:15.40px;line-height:15.40px;color:#ececec;letter-spacing:0.274px;">0,2703</span>
<span class="t" style="left:324.20px;top:62.61px;font-size:15.40px;line-height:15.40px;color:#ececec;letter-spacing:0.274px;">0,3140</span>
<span class="t" style="left:410.25px;top:62.61px;font-size:15.40px;line-height:15.40px;color:#ececec;letter-spacing:0.274px;">0,3187</span>
<span class="t" style="left:496.30px;top:62.61px;font-size:15.40px;line-height:15.40px;color:#ececec;letter-spacing:0.274px;">0,3199</span>
<span class="t" style="left:582.35px;top:62.61px;font-size:15.40px;line-height:15.40px;color:#ececec;letter-spacing:0.274px;">0,3196</span>
<span class="t" style="left:668.40px;top:62.61px;font-size:15.40px;line-height:15.40px;color:#ececec;letter-spacing:0.274px;">0,3197</span>
<span class="t" style="left:754.45px;top:62.61px;font-size:15.40px;line-height:15.40px;color:#ececec;letter-spacing:0.274px;">0,3209</span>
<span class="t" style="left:840.50px;top:62.61px;font-size:15.40px;line-height:15.40px;color:#ececec;letter-spacing:0.274px;">0,3201</span>
<span class="t" style="left:926.55px;top:62.61px;font-size:15.40px;line-height:15.40px;color:#ececec;letter-spacing:0.274px;">0,3202</span>
<span class="t" style="left:1012.60px;top:62.61px;font-size:15.40px;line-height:15.40px;color:#ececec;letter-spacing:0.274px;">0,3202</span>
<div class="a" style="left:14px;top:83.0px;width:1048px;height:26.8px;background:#404040;"></div>
<div class="a" style="left:0;top:83.0px;width:14px;height:26.8px;background:linear-gradient(#333,#222);"></div>
<span class="t" style="left:17.80px;top:89.46px;font-size:15.40px;line-height:15.40px;color:#f6f6f6;">Y</span>
<span class="t" style="left:152.10px;top:89.46px;font-size:15.40px;line-height:15.40px;color:#f6f6f6;letter-spacing:0.274px;">0,5670</span>
<span class="t" style="left:238.15px;top:89.46px;font-size:15.40px;line-height:15.40px;color:#f6f6f6;letter-spacing:0.274px;">1,0025</span>
<span class="t" style="left:324.20px;top:89.46px;font-size:15.40px;line-height:15.40px;color:#f6f6f6;letter-spacing:0.274px;">2,8738</span>
<span class="t" style="left:410.25px;top:89.46px;font-size:15.40px;line-height:15.40px;color:#f6f6f6;letter-spacing:0.274px;">6,4918</span>
<span class="t" style="left:496.30px;top:89.46px;font-size:15.40px;line-height:15.40px;color:#f6f6f6;letter-spacing:0.442px;">11,7527</span>
<span class="t" style="left:582.35px;top:89.46px;font-size:15.40px;line-height:15.40px;color:#f6f6f6;letter-spacing:0.279px;">19,3217</span>
<span class="t" style="left:668.40px;top:89.46px;font-size:15.40px;line-height:15.40px;color:#f6f6f6;letter-spacing:0.279px;">28,1583</span>
<span class="t" style="left:754.45px;top:89.46px;font-size:15.40px;line-height:15.40px;color:#f6f6f6;letter-spacing:0.279px;">39,4421</span>
<span class="t" style="left:840.50px;top:89.46px;font-size:15.40px;line-height:15.40px;color:#f6f6f6;letter-spacing:0.279px;">52,7088</span>
<span class="t" style="left:926.55px;top:89.46px;font-size:15.40px;line-height:15.40px;color:#f6f6f6;letter-spacing:0.279px;">69,6076</span>
<span class="t" style="left:1012.60px;top:89.46px;font-size:15.40px;line-height:15.40px;color:#f6f6f6;letter-spacing:0.279px;">89,5290</span>
<div class="a" style="left:14px;top:109.8px;width:1048px;height:27.0px;background:#858585;"></div>
<div class="a" style="left:0;top:109.8px;width:14px;height:27.0px;background:linear-gradient(#333,#222);"></div>
<span class="t" style="left:17.80px;top:116.36px;font-size:15.40px;line-height:15.40px;color:#ececec;letter-spacing:0.316px;">Target Y</span>
<span class="t" style="left:152.10px;top:116.36px;font-size:15.40px;line-height:15.40px;color:#ececec;letter-spacing:0.274px;">0,0000</span>
<span class="t" style="left:238.15px;top:116.36px;font-size:15.40px;line-height:15.40px;color:#ececec;letter-spacing:0.274px;">1,6242</span>
<span class="t" style="left:324.20px;top:116.36px;font-size:15.40px;line-height:15.40px;color:#ececec;letter-spacing:0.274px;">4,1437</span>
<span class="t" style="left:410.25px;top:116.36px;font-size:15.40px;line-height:15.40px;color:#ececec;letter-spacing:0.465px;">8,1136</span>
<span class="t" style="left:496.30px;top:116.36px;font-size:15.40px;line-height:15.40px;color:#ececec;letter-spacing:0.279px;">13,7072</span>
<span class="t" style="left:582.35px;top:116.36px;font-size:15.40px;line-height:15.40px;color:#ececec;letter-spacing:0.279px;">21,0736</span>
<span class="t" style="left:668.40px;top:116.36px;font-size:15.40px;line-height:15.40px;color:#ececec;letter-spacing:0.279px;">30,3450</span>
<span class="t" style="left:754.45px;top:116.36px;font-size:15.40px;line-height:15.40px;color:#ececec;letter-spacing:0.442px;">41,6411</span>
<span class="t" style="left:840.50px;top:116.36px;font-size:15.40px;line-height:15.40px;color:#ececec;letter-spacing:0.279px;">55,0717</span>
<span class="t" style="left:926.55px;top:116.36px;font-size:15.40px;line-height:15.40px;color:#ececec;letter-spacing:0.279px;">70,7387</span>
<span class="t" style="left:1012.60px;top:116.36px;font-size:15.40px;line-height:15.40px;color:#ececec;letter-spacing:0.279px;">88,7375</span>
<div class="a" style="left:14px;top:136.8px;width:1048px;height:26.7px;background:#404040;"></div>
<div class="a" style="left:0;top:136.8px;width:14px;height:26.7px;background:linear-gradient(#333,#222);"></div>
<span class="t" style="left:17.80px;top:143.21px;font-size:15.40px;line-height:15.40px;color:#f6f6f6;letter-spacing:0.707px;">Gamma Log/Log</span>
<span class="t" style="left:152.10px;top:143.21px;font-size:15.40px;line-height:15.40px;color:#f6f6f6;letter-spacing:0.274px;">1,2778</span>
<span class="t" style="left:238.15px;top:143.21px;font-size:15.40px;line-height:15.40px;color:#f6f6f6;letter-spacing:0.274px;">2,0109</span>
<span class="t" style="left:324.20px;top:143.21px;font-size:15.40px;line-height:15.40px;color:#f6f6f6;letter-spacing:0.274px;">2,1592</span>
<span class="t" style="left:410.25px;top:143.21px;font-size:15.40px;line-height:15.40px;color:#f6f6f6;letter-spacing:0.465px;">2,1911</span>
<span class="t" style="left:496.30px;top:143.21px;font-size:15.40px;line-height:15.40px;color:#f6f6f6;letter-spacing:0.274px;">2,2141</span>
<span class="t" style="left:582.35px;top:143.21px;font-size:15.40px;line-height:15.40px;color:#f6f6f6;letter-spacing:0.465px;">2,2118</span>
<span class="t" style="left:668.40px;top:143.21px;font-size:15.40px;line-height:15.40px;color:#f6f6f6;letter-spacing:0.274px;">2,2341</span>
<span class="t" style="left:754.45px;top:143.21px;font-size:15.40px;line-height:15.40px;color:#f6f6f6;letter-spacing:0.465px;">2,2411</span>
<span class="t" style="left:840.50px;top:143.21px;font-size:15.40px;line-height:15.40px;color:#f6f6f6;letter-spacing:0.274px;">2,2514</span>
<span class="t" style="left:926.55px;top:143.21px;font-size:15.40px;line-height:15.40px;color:#f6f6f6;letter-spacing:0.274px;">2,2351</span>
<span class="t" style="left:1012.60px;top:143.21px;font-size:15.40px;line-height:15.40px;color:#f6f6f6;letter-spacing:0.465px;">2,2116</span>
<div class="a" style="left:14px;top:163.5px;width:1048px;height:26.7px;background:#858585;"></div>
<div class="a" style="left:0;top:163.5px;width:14px;height:26.7px;background:linear-gradient(#333,#222);"></div>
<span class="t" style="left:17.80px;top:169.91px;font-size:15.40px;line-height:15.40px;color:#ececec;letter-spacing:-0.784px;">CCT</span>
<span class="t" style="left:152.10px;top:169.91px;font-size:15.40px;line-height:15.40px;color:#ececec;letter-spacing:0.285px;">9706,0000</span>
<span class="t" style="left:238.15px;top:169.91px;font-size:15.40px;line-height:15.40px;color:#ececec;letter-spacing:0.285px;">8582,0000</span>
<span class="t" style="left:324.20px;top:169.91px;font-size:15.40px;line-height:15.40px;color:#ececec;letter-spacing:0.285px;">6579,0000</span>
<span class="t" style="left:410.25px;top:169.91px;font-size:15.40px;line-height:15.40px;color:#ececec;letter-spacing:0.285px;">6709,0000</span>
<span class="t" style="left:496.30px;top:169.91px;font-size:15.40px;line-height:15.40px;color:#ececec;letter-spacing:0.285px;">6766,0000</span>
<span class="t" style="left:582.35px;top:169.91px;font-size:15.40px;line-height:15.40px;color:#ececec;letter-spacing:0.285px;">6759,0000</span>
<span class="t" style="left:668.40px;top:169.91px;font-size:15.40px;line-height:15.40px;color:#ececec;letter-spacing:0.285px;">6779,0000</span>
<span class="t" style="left:754.45px;top:169.91px;font-size:15.40px;line-height:15.40px;color:#ececec;letter-spacing:0.285px;">6799,0000</span>
<span class="t" style="left:840.50px;top:169.91px;font-size:15.40px;line-height:15.40px;color:#ececec;letter-spacing:0.285px;">6816,0000</span>
<span class="t" style="left:926.55px;top:169.91px;font-size:15.40px;line-height:15.40px;color:#ececec;letter-spacing:0.285px;">6828,0000</span>
<span class="t" style="left:1012.60px;top:169.91px;font-size:15.40px;line-height:15.40px;color:#ececec;letter-spacing:0.285px;">6831,0000</span>
<div class="a" style="left:14px;top:190.2px;width:1048px;height:26.6px;background:#404040;"></div>
<div class="a" style="left:0;top:190.2px;width:14px;height:26.6px;background:linear-gradient(#333,#222);"></div>
<span class="t" style="left:17.80px;top:196.56px;font-size:15.40px;line-height:15.40px;color:#f6f6f6;letter-spacing:0.186px;">ΔE 2000</span>
<span class="t" style="left:152.10px;top:196.56px;font-size:15.40px;line-height:15.40px;color:#f6f6f6;letter-spacing:0.274px;">2,6309</span>
<span class="t" style="left:238.15px;top:196.56px;font-size:15.40px;line-height:15.40px;color:#f6f6f6;letter-spacing:0.274px;">2,9053</span>
<span class="t" style="left:324.20px;top:196.56px;font-size:15.40px;line-height:15.40px;color:#f6f6f6;letter-spacing:0.274px;">2,7490</span>
<span class="t" style="left:410.25px;top:196.56px;font-size:15.40px;line-height:15.40px;color:#f6f6f6;letter-spacing:0.274px;">2,3665</span>
<span class="t" style="left:496.30px;top:196.56px;font-size:15.40px;line-height:15.40px;color:#f6f6f6;letter-spacing:0.274px;">2,2082</span>
<span class="t" style="left:582.35px;top:196.56px;font-size:15.40px;line-height:15.40px;color:#f6f6f6;letter-spacing:0.274px;">2,3839</span>
<span class="t" style="left:668.40px;top:196.56px;font-size:15.40px;line-height:15.40px;color:#f6f6f6;letter-spacing:0.274px;">2,5699</span>
<span class="t" style="left:754.45px;top:196.56px;font-size:15.40px;line-height:15.40px;color:#f6f6f6;letter-spacing:0.274px;">2,3197</span>
<span class="t" style="left:840.50px;top:196.56px;font-size:15.40px;line-height:15.40px;color:#f6f6f6;letter-spacing:0.274px;">2,7559</span>
<span class="t" style="left:926.55px;top:196.56px;font-size:15.40px;line-height:15.40px;color:#f6f6f6;letter-spacing:0.274px;">2,8059</span>
<span class="t" style="left:1012.60px;top:196.56px;font-size:15.40px;line-height:15.40px;color:#f6f6f6;letter-spacing:0.274px;">3,0371</span>
<div class="a" style="left:14px;top:216.8px;width:1048px;height:16.2px;background:#585858;"></div>
<div class="a" style="left:15px;top:218px;width:15px;height:14px;background:#8a8a8a;border-radius:2px;"></div>
<div class="a" style="left:19px;top:220.5px;width:0;height:0;border-top:4.5px solid transparent;border-bottom:4.5px solid transparent;border-right:7px solid #333;"></div>
<div class="a" style="left:33px;top:218.5px;width:547px;height:13px;background:#444;border-radius:6px;"></div>
<div class="a" style="left:1046px;top:218px;width:15px;height:14px;background:#8a8a8a;border-radius:2px;"></div>
<div class="a" style="left:1051px;top:220.5px;width:0;height:0;border-top:4.5px solid transparent;border-bottom:4.5px solid transparent;border-left:7px solid #333;"></div>
</div>
<div class="a" id="bottombar" style="left:3.5px;top:884px;width:1719px;height:61px;background:#484848;"></div>
<div class="a" style="left:4.0px;top:884px;width:64.4px;height:61px;border-radius:4px 4px 0 0;background:linear-gradient(#a0a0a0 0,#8e8e8e 8%,#7a7a7a 50%,#5e5e5e 100%);"></div>
<div class="a" style="left:9.0px;top:889px;width:54.4px;height:36px;border-radius:4px;background:rgb(0,0,0);box-shadow:inset 0 0 2px rgba(0,0,0,0.35);"></div>
<span class="t" style="left:33.36px;top:932.17px;font-size:10.20px;line-height:10.20px;color:#272727;">0</span>
<div class="a" style="left:70.4px;top:884px;width:64.4px;height:61px;border-radius:4px 4px 0 0;background:linear-gradient(#a0a0a0 0,#8e8e8e 8%,#7a7a7a 50%,#5e5e5e 100%);"></div>
<div class="a" style="left:75.4px;top:889px;width:54.4px;height:36px;border-radius:4px;background:rgb(13,13,13);box-shadow:inset 0 0 2px rgba(0,0,0,0.35);"></div>
<span class="t" style="left:99.78px;top:932.17px;font-size:10.20px;line-height:10.20px;color:#272727;">5</span>
<div class="a" style="left:136.8px;top:884px;width:64.4px;height:61px;border-radius:4px 4px 0 0;background:linear-gradient(#a0a0a0 0,#8e8e8e 8%,#7a7a7a 50%,#5e5e5e 100%);"></div>
<div class="a" style="left:141.8px;top:889px;width:54.4px;height:36px;border-radius:4px;background:rgb(26,26,26);box-shadow:inset 0 0 2px rgba(0,0,0,0.35);"></div>
<span class="t" style="left:163.37px;top:932.17px;font-size:10.20px;line-height:10.20px;color:#272727;">10</span>
<div class="a" style="left:203.3px;top:884px;width:64.4px;height:61px;border-radius:4px 4px 0 0;background:linear-gradient(#a0a0a0 0,#8e8e8e 8%,#7a7a7a 50%,#5e5e5e 100%);"></div>
<div class="a" style="left:208.3px;top:889px;width:54.4px;height:36px;border-radius:4px;background:rgb(38,38,38);box-shadow:inset 0 0 2px rgba(0,0,0,0.35);"></div>
<span class="t" style="left:229.79px;top:932.17px;font-size:10.20px;line-height:10.20px;color:#272727;">15</span>
<div class="a" style="left:269.7px;top:884px;width:64.4px;height:61px;border-radius:4px 4px 0 0;background:linear-gradient(#a0a0a0 0,#8e8e8e 8%,#7a7a7a 50%,#5e5e5e 100%);"></div>
<div class="a" style="left:274.7px;top:889px;width:54.4px;height:36px;border-radius:4px;background:rgb(51,51,51);box-shadow:inset 0 0 2px rgba(0,0,0,0.35);"></div>
<span class="t" style="left:296.21px;top:932.17px;font-size:10.20px;line-height:10.20px;color:#272727;">20</span>
<div class="a" style="left:336.1px;top:884px;width:64.4px;height:61px;border-radius:4px 4px 0 0;background:linear-gradient(#a0a0a0 0,#8e8e8e 8%,#7a7a7a 50%,#5e5e5e 100%);"></div>
<div class="a" style="left:341.1px;top:889px;width:54.4px;height:36px;border-radius:4px;background:rgb(64,64,64);box-shadow:inset 0 0 2px rgba(0,0,0,0.35);"></div>
<span class="t" style="left:362.63px;top:932.17px;font-size:10.20px;line-height:10.20px;color:#272727;">25</span>
<div class="a" style="left:402.5px;top:884px;width:64.4px;height:61px;border-radius:4px 4px 0 0;background:linear-gradient(#a0a0a0 0,#8e8e8e 8%,#7a7a7a 50%,#5e5e5e 100%);"></div>
<div class="a" style="left:407.5px;top:889px;width:54.4px;height:36px;border-radius:4px;background:rgb(76,76,76);box-shadow:inset 0 0 2px rgba(0,0,0,0.35);"></div>
<span class="t" style="left:429.05px;top:932.17px;font-size:10.20px;line-height:10.20px;color:#272727;">30</span>
<div class="a" style="left:468.9px;top:884px;width:64.4px;height:61px;border-radius:4px 4px 0 0;background:linear-gradient(#a0a0a0 0,#8e8e8e 8%,#7a7a7a 50%,#5e5e5e 100%);"></div>
<div class="a" style="left:473.9px;top:889px;width:54.4px;height:36px;border-radius:4px;background:rgb(89,89,89);box-shadow:inset 0 0 2px rgba(0,0,0,0.35);"></div>
<span class="t" style="left:495.47px;top:932.17px;font-size:10.20px;line-height:10.20px;color:#272727;">35</span>
<div class="a" style="left:535.4px;top:884px;width:64.4px;height:61px;border-radius:4px 4px 0 0;background:linear-gradient(#a0a0a0 0,#8e8e8e 8%,#7a7a7a 50%,#5e5e5e 100%);"></div>
<div class="a" style="left:540.4px;top:889px;width:54.4px;height:36px;border-radius:4px;background:rgb(102,102,102);box-shadow:inset 0 0 2px rgba(0,0,0,0.35);"></div>
<span class="t" style="left:561.89px;top:932.17px;font-size:10.20px;line-height:10.20px;color:#272727;">40</span>
<div class="a" style="left:601.8px;top:884px;width:64.4px;height:61px;border-radius:4px 4px 0 0;background:linear-gradient(#a0a0a0 0,#8e8e8e 8%,#7a7a7a 50%,#5e5e5e 100%);"></div>
<div class="a" style="left:606.8px;top:889px;width:54.4px;height:36px;border-radius:4px;background:rgb(115,115,115);box-shadow:inset 0 0 2px rgba(0,0,0,0.35);"></div>
<span class="t" style="left:628.31px;top:932.17px;font-size:10.20px;line-height:10.20px;color:#272727;">45</span>
<div class="a" style="left:668.2px;top:884px;width:64.4px;height:61px;border-radius:4px 4px 0 0;background:linear-gradient(#a0a0a0 0,#8e8e8e 8%,#7a7a7a 50%,#5e5e5e 100%);"></div>
<div class="a" style="left:673.2px;top:889px;width:54.4px;height:36px;border-radius:4px;background:rgb(128,128,128);box-shadow:inset 0 0 2px rgba(0,0,0,0.35);"></div>
<span class="t" style="left:694.73px;top:932.17px;font-size:10.20px;line-height:10.20px;color:#272727;">50</span>
<div class="a" style="left:734.6px;top:884px;width:64.4px;height:61px;border-radius:4px 4px 0 0;background:linear-gradient(#a0a0a0 0,#8e8e8e 8%,#7a7a7a 50%,#5e5e5e 100%);"></div>
<div class="a" style="left:739.6px;top:889px;width:54.4px;height:36px;border-radius:4px;background:rgb(140,140,140);box-shadow:inset 0 0 2px rgba(0,0,0,0.35);"></div>
<span class="t" style="left:761.15px;top:932.17px;font-size:10.20px;line-height:10.20px;color:#272727;">55</span>
<div class="a" style="left:801.0px;top:884px;width:64.4px;height:61px;border-radius:4px 4px 0 0;background:linear-gradient(#a0a0a0 0,#8e8e8e 8%,#7a7a7a 50%,#5e5e5e 100%);"></div>
<div class="a" style="left:806.0px;top:889px;width:54.4px;height:36px;border-radius:4px;background:rgb(153,153,153);box-shadow:inset 0 0 2px rgba(0,0,0,0.35);"></div>
<span class="t" style="left:827.57px;top:932.17px;font-size:10.20px;line-height:10.20px;color:#272727;">60</span>
<div class="a" style="left:867.5px;top:884px;width:64.4px;height:61px;border-radius:4px 4px 0 0;background:linear-gradient(#a0a0a0 0,#8e8e8e 8%,#7a7a7a 50%,#5e5e5e 100%);"></div>
<div class="a" style="left:872.5px;top:889px;width:54.4px;height:36px;border-radius:4px;background:rgb(166,166,166);box-shadow:inset 0 0 2px rgba(0,0,0,0.35);"></div>
<span class="t" style="left:893.99px;top:932.17px;font-size:10.20px;line-height:10.20px;color:#272727;">65</span>
<div class="a" style="left:933.9px;top:884px;width:64.4px;height:61px;border-radius:4px 4px 0 0;background:linear-gradient(#a0a0a0 0,#8e8e8e 8%,#7a7a7a 50%,#5e5e5e 100%);"></div>
<div class="a" style="left:938.9px;top:889px;width:54.4px;height:36px;border-radius:4px;background:rgb(178,178,178);box-shadow:inset 0 0 2px rgba(0,0,0,0.35);"></div>
<span class="t" style="left:960.41px;top:932.17px;font-size:10.20px;line-height:10.20px;color:#272727;">70</span>
<div class="a" style="left:1000.3px;top:884px;width:64.4px;height:61px;border-radius:4px 4px 0 0;background:linear-gradient(#a0a0a0 0,#8e8e8e 8%,#7a7a7a 50%,#5e5e5e 100%);"></div>
<div class="a" style="left:1005.3px;top:889px;width:54.4px;height:36px;border-radius:4px;background:rgb(191,191,191);box-shadow:inset 0 0 2px rgba(0,0,0,0.35);"></div>
<span class="t" style="left:1026.83px;top:932.17px;font-size:10.20px;line-height:10.20px;color:#272727;">75</span>
<div class="a" style="left:1066.7px;top:884px;width:64.4px;height:61px;border-radius:4px 4px 0 0;background:linear-gradient(#a0a0a0 0,#8e8e8e 8%,#7a7a7a 50%,#5e5e5e 100%);"></div>
<div class="a" style="left:1071.7px;top:889px;width:54.4px;height:36px;border-radius:4px;background:rgb(204,204,204);box-shadow:inset 0 0 2px rgba(0,0,0,0.35);"></div>
<span class="t" style="left:1093.25px;top:932.17px;font-size:10.20px;line-height:10.20px;color:#272727;">80</span>
<div class="a" style="left:1133.1px;top:884px;width:64.4px;height:61px;border-radius:4px 4px 0 0;background:linear-gradient(#a0a0a0 0,#8e8e8e 8%,#7a7a7a 50%,#5e5e5e 100%);"></div>
<div class="a" style="left:1138.1px;top:889px;width:54.4px;height:36px;border-radius:4px;background:rgb(217,217,217);box-shadow:inset 0 0 2px rgba(0,0,0,0.35);"></div>
<span class="t" style="left:1159.67px;top:932.17px;font-size:10.20px;line-height:10.20px;color:#272727;">85</span>
<div class="a" style="left:1199.6px;top:884px;width:64.4px;height:61px;border-radius:4px 4px 0 0;background:linear-gradient(#a0a0a0 0,#8e8e8e 8%,#7a7a7a 50%,#5e5e5e 100%);"></div>
<div class="a" style="left:1204.6px;top:889px;width:54.4px;height:36px;border-radius:4px;background:rgb(230,230,230);box-shadow:inset 0 0 2px rgba(0,0,0,0.35);"></div>
<span class="t" style="left:1226.09px;top:932.17px;font-size:10.20px;line-height:10.20px;color:#272727;">90</span>
<div class="a" style="left:1266.0px;top:884px;width:64.4px;height:61px;border-radius:4px 4px 0 0;background:linear-gradient(#a0a0a0 0,#8e8e8e 8%,#7a7a7a 50%,#5e5e5e 100%);"></div>
<div class="a" style="left:1271.0px;top:889px;width:54.4px;height:36px;border-radius:4px;background:rgb(242,242,242);box-shadow:inset 0 0 2px rgba(0,0,0,0.35);"></div>
<span class="t" style="left:1292.51px;top:932.17px;font-size:10.20px;line-height:10.20px;color:#272727;">95</span>
<div class="a" style="left:1332.4px;top:884px;width:64.4px;height:61px;border-radius:4px 4px 0 0;background:linear-gradient(#1c1c1c,#383838);"></div>
<div class="a" style="left:1337.4px;top:889px;width:54.4px;height:36px;border-radius:4px;background:rgb(255,255,255);box-shadow:inset 0 0 2px rgba(0,0,0,0.35);"></div>
<span class="t" style="left:1356.09px;top:932.17px;font-size:10.20px;line-height:10.20px;color:#fff;font-weight:bold;">100</span>
<div class="a" style="left:1400px;top:884px;width:48px;height:18px;border-radius:3px 3px 0 0;background:linear-gradient(#9c9c9c,#7c7c7c);"></div>
<div class="a" style="left:1400px;top:903px;width:48px;height:42px;background:linear-gradient(#909090,#6c6c6c);"></div>
<div class="a" style="left:1416.7px;top:885.5px;width:14px;height:14px;border-radius:50%;background:linear-gradient(#7a7a7a,#9a9a9a);"></div>
<div class="a" style="left:1419.2px;top:889.5px;width:0;height:0;border-left:4.5px solid transparent;border-right:4.5px solid transparent;border-bottom:5px solid #333;"></div>
<div class="a" style="left:1408px;top:908px;width:28px;height:27px;border:2px solid #2a2a2a;border-radius:4px;background:linear-gradient(#b4b4b4 0,#a8a8a8 50%,#8c8c8c 50%,#808080 100%);"></div>
<div class="a" style="left:1417.5px;top:917px;width:13.5px;height:13.5px;background:#000;"></div>
<div class="a" style="left:1449.3px;top:884px;width:44.8px;height:30px;border-radius:3px 0 0 0;background:linear-gradient(#9e9e9e,#727272);"></div>
<div class="a" style="left:1461.3px;top:888.5px;width:21px;height:21px;border-radius:50%;background:linear-gradient(#808080,#a2a2a2);"></div>
<div class="a" style="left:1495.3px;top:884px;width:44.1px;height:30px;background:linear-gradient(#9e9e9e,#727272);"></div>
<div class="a" style="left:1506.9px;top:888.5px;width:21px;height:21px;border-radius:50%;background:linear-gradient(#808080,#a2a2a2);"></div>
<div class="a" style="left:1540.6px;top:884px;width:43.6px;height:30px;background:linear-gradient(#9e9e9e,#727272);"></div>
<div class="a" style="left:1552.0px;top:888.5px;width:21px;height:21px;border-radius:50%;background:linear-gradient(#808080,#a2a2a2);"></div>
<div class="a" style="left:1585.4px;top:884px;width:43.9px;height:30px;background:linear-gradient(#9e9e9e,#727272);"></div>
<div class="a" style="left:1597.0px;top:888.5px;width:21px;height:21px;border-radius:50%;background:linear-gradient(#808080,#a2a2a2);"></div>
<div class="a" style="left:1630.5px;top:884px;width:43.5px;height:30px;background:linear-gradient(#9e9e9e,#727272);"></div>
<div class="a" style="left:1641.8px;top:888.5px;width:21px;height:21px;border-radius:50%;background:linear-gradient(#808080,#a2a2a2);"></div>
<div class="a" style="left:1675.2px;top:884px;width:48px;height:30px;background:linear-gradient(#454545,#2c2c2c);"></div>
<div class="a" style="left:1688.5px;top:888.5px;width:21px;height:21px;border-radius:50%;background:linear-gradient(#333,#444);"></div>
<div class="a" style="left:1449.3px;top:915px;width:135px;height:30px;border-radius:4px 0 0 0;background:linear-gradient(#9e9e9e,#767676);"></div>
<div class="a" style="left:1585.4px;top:915px;width:136px;height:30px;border-radius:0 4px 0 0;background:linear-gradient(#9e9e9e,#767676);"></div>
<div class="a" style="left:1470.2px;top:920.4px;width:19px;height:19px;border-radius:50%;background:linear-gradient(#868686,#a4a4a4);"></div>
<div class="a" style="left:1683.8px;top:920.4px;width:19px;height:19px;border-radius:50%;background:linear-gradient(#868686,#a4a4a4);"></div>
<svg width="1723" height="945" viewBox="0 0 1723 945">
<rect x="1467.8" y="895.0" width="8" height="8" fill="#2c2c2c"/>
<path d="M1513.9 894.0 L1522.4 899.0 L1513.9 904.0 Z" fill="#2c2c2c"/>
<path d="M1559.5 893.8 h-2.6 v10.4 h2.6 M1565.5 893.8 h2.6 v10.4 h-2.6" fill="none" stroke="#2c2c2c" stroke-width="2"/>
<rect x="1560.1" y="898.2" width="1.6" height="1.6" fill="#2c2c2c"/><rect x="1563.3" y="898.2" width="1.6" height="1.6" fill="#2c2c2c"/>
<path d="M1607.5 899.2 c -1.8 -3.1 -6 -3.1 -6 0 c 0 3.1 4.2 3.1 6 0 c 1.8 -3.1 6 -3.1 6 0 c 0 3.1 -4.2 3.1 -6 0 Z" fill="none" stroke="#2c2c2c" stroke-width="1.6"/>
<g transform="translate(1652.3,899.0)" fill="none" stroke="#2c2c2c" stroke-width="2"><path d="M-5 -1 A5.2 5.2 0 0 1 4 -3.2"/><path d="M5 1 A5.2 5.2 0 0 1 -4 3.2"/></g>
<g transform="translate(1652.3,899.0)" fill="#2c2c2c"><path d="M2 -6.5 L6.5 -5.5 L4.5 -1 Z"/><path d="M-2 6.5 L-6.5 5.5 L-4.5 1 Z"/></g>
<polyline points="1479.7,925.3 1475.3,929.9 1479.7,934.5" fill="none" stroke="#2c2c2c" stroke-width="1.3"/>
<polyline points="1484.5,925.3 1480.1,929.9 1484.5,934.5" fill="none" stroke="#2c2c2c" stroke-width="1.3"/>
<polyline points="1688.7,925.3 1693.1,929.9 1688.7,934.5" fill="none" stroke="#2c2c2c" stroke-width="1.3"/>
<polyline points="1693.5,925.3 1697.9,929.9 1693.5,934.5" fill="none" stroke="#2c2c2c" stroke-width="1.3"/>
</svg>
<span class="t" style="left:1506.60px;top:920.23px;font-size:20.40px;line-height:20.40px;color:#303030;letter-spacing:0.457px;font-weight:bold;">Back</span>
<span class="t" style="left:1613.00px;top:920.23px;font-size:20.40px;line-height:20.40px;color:#303030;letter-spacing:2.045px;font-weight:bold;">Next</span>
</body></html>
